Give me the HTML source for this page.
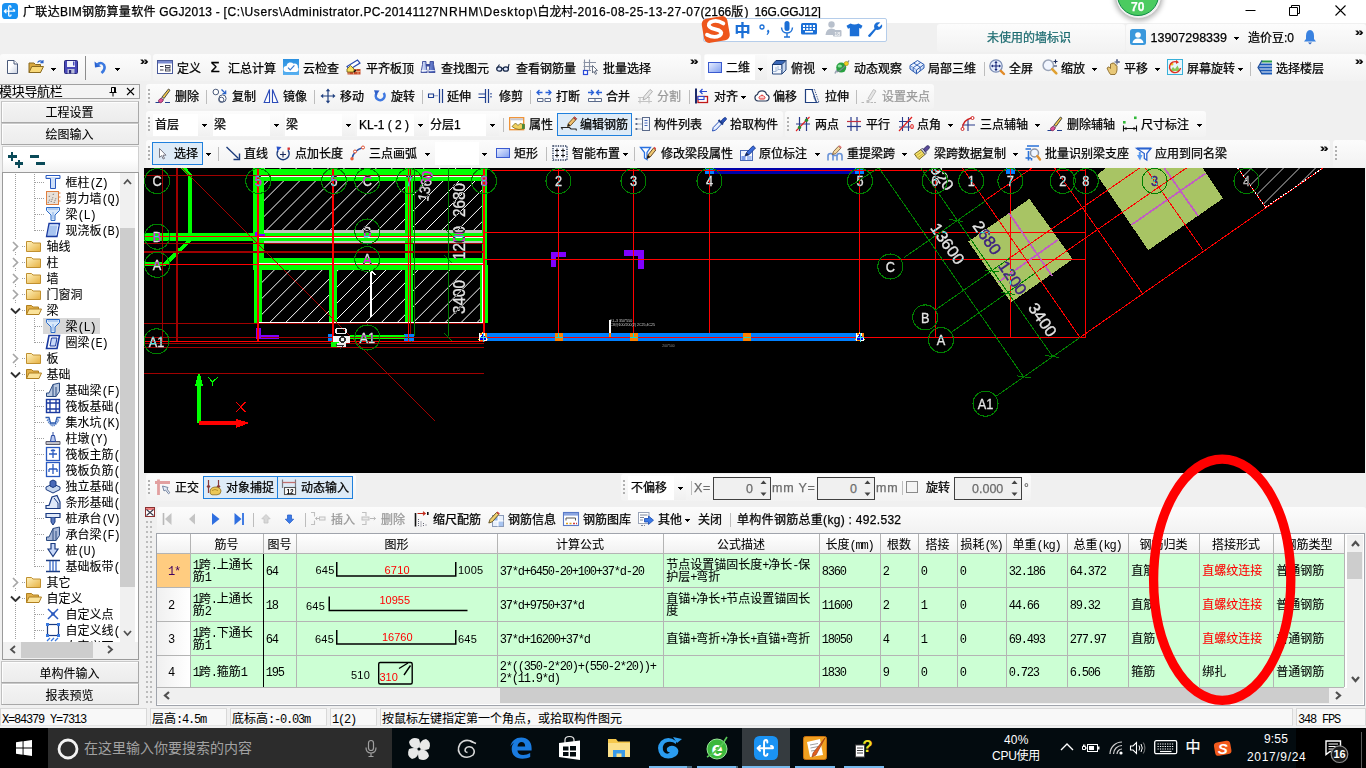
<!DOCTYPE html><html lang="zh-CN"><head><meta charset="utf-8"><title>广联达BIM钢筋算量软件 GGJ2013</title><style>
*{box-sizing:border-box;margin:0;padding:0}
html,body{width:1366px;height:768px;overflow:hidden;background:#f0f0f0}
body{position:relative;font-family:"Liberation Sans","Noto Sans CJK SC",sans-serif;font-size:12px;color:#000}
div,span.t,svg{position:absolute}
svg{overflow:visible}
.t{white-space:nowrap;display:block;-webkit-text-stroke:0.25px}
.s{font-family:"Liberation Mono","Noto Sans CJK SC",sans-serif;font-size:12px;-webkit-text-stroke:0.08px}
i{font-style:normal;font-family:"Liberation Mono",monospace;font-size:12px;letter-spacing:-1.2px;-webkit-text-stroke:0}
</style></head><body>
<div style="left:0px;top:0px;width:1366px;height:22.5px;background:#fff"></div>
<svg style="left:2px;top:3px;" width="16" height="16" viewBox="0 0 16 16"><rect x="0" y="0" width="16" height="16" rx="3.6" fill="#1a92f2"/><path d="M6.7 12.3V4.2Q6.8 2.7 8 2.7Q9 2.8 8.9 4.3M6.7 12.3Q6.9 13.3 8 13.2Q9 13 9 11.9" fill="none" stroke="#fff" stroke-width="1.3" stroke-linecap="round"/><path d="M2.6 8.2H12.6Q12.9 6.7 11.3 6.6M4 6.6L2.4 8.2L4 9.8" fill="none" stroke="#fff" stroke-width="1.3" stroke-linecap="round" stroke-linejoin="round"/></svg>
<span class="t y" style="left:23.1px;top:2.0px;height:20px;line-height:20px;white-space:pre;"><span style="letter-spacing:0.271px">广联达BIM钢筋算量软件 </span><span style="letter-spacing:0.217px">GGJ2013 - </span><span style="letter-spacing:0.606px">[C:\Users\</span><span style="letter-spacing:0.478px">Administrator</span><span style="letter-spacing:0.242px">.PC-20141127</span><span style="letter-spacing:1.0px">NRHM</span><span style="letter-spacing:0.855px">\Desktop\</span><span style="letter-spacing:-0.205px">白龙村</span><span style="letter-spacing:0.509px">-2016-08-25-13-27-07</span><span style="letter-spacing:-0.001px">(2166</span><span style="letter-spacing:1.252px">版) </span><span style="letter-spacing:-0.098px">16G.GGJ12]</span></span>
<svg style="left:1244px;top:3px;" width="110" height="14" viewBox="0 0 110 14"><path d="M1.5 7.5H11.5" stroke="#000" fill="none"/><path d="M45.5 4.5H53.5V12.5H45.5ZM47.5 4.5V2.5H55.5V10.5H53.5" stroke="#000" fill="none"/><path d="M91.5 2.5L101.5 12.5M101.5 2.5L91.5 12.5" stroke="#000" fill="none" stroke-width="1.1"/></svg>
<div style="left:1114.5px;top:-28.5px;width:47px;height:47px;border-radius:50%;background:#f0f0f0;border:1px solid #c4c4c4;box-shadow:0 1px 5px 1px rgba(0,0,0,.28)"></div>
<div style="left:1117px;top:-25.6px;width:42px;height:42px;border-radius:50%;background:#4bcb60;border:1px solid #0c8a44"></div>
<span class="t y" style="left:1131px;top:1.2999999999999998px;height:12px;line-height:12px;color:#fff;font-weight:bold;font-size:12px;">70</span>
<div style="left:937px;top:24px;width:188px;height:28px;background:linear-gradient(#fcfcfc,#f2f2f2);border-radius:3px;"></div>
<div style="left:1126px;top:24px;width:240px;height:28px;background:linear-gradient(#fcfcfc,#f2f2f2);border-radius:3px;"></div>
<span class="t y" style="left:987px;top:28.0px;height:20px;line-height:20px;color:#1c6b70">未使用的墙标识</span>
<svg style="left:1130px;top:28.5px;" width="16" height="16" viewBox="0 0 16 16"><rect x="0" y="0" width="16" height="16" rx="2.5" fill="#3a98dc"/><circle cx="8" cy="6" r="2.8" fill="#fff"/><path d="M2.5 14Q3 9.5 8 9.5Q13 9.5 13.5 14Z" fill="#fff"/></svg>
<span class="t y" style="left:1150.5px;top:27.5px;height:20px;line-height:20px;font-size:12.5px;letter-spacing:0.001px;">13907298339</span>
<svg style="left:1233.5px;top:36.5px;shape-rendering:crispEdges" width="5" height="3" viewBox="0 0 5 3"><path d="M0 0H5L2.5 3Z" fill="#000"/></svg>
<span class="t y" style="left:1248px;top:27.5px;height:20px;line-height:20px;">造价豆:0</span>
<svg style="left:1302px;top:28.5px;" width="16" height="16" viewBox="0 0 16 16"><path d="M8 1Q12 1.5 12 7V10L14 12.5H2L4 10V7Q4 1.5 8 1Z" fill="#3a82e0"/><path d="M6 13.5H10L8 15.5Z" fill="#2a62c0"/></svg>
<span class="t y" style="left:1354.5px;top:26.5px;height:12px;line-height:12px;font-size:12px;font-weight:bold;transform:scale(1.3,0.85);transform-origin:0 50%">»</span>
<div style="left:703px;top:18px;width:184px;height:23.5px;background:#fff;border:1px solid #b5cdea;border-radius:2px"></div>
<svg style="left:700.3px;top:12.3px;" width="32.5" height="32.5" viewBox="0 0 30 30"><g transform="rotate(-10 14 16)"><rect x="2.5" y="5" width="24" height="22.5" rx="5" fill="#ee561c"/></g><path d="M21.5 10.5Q15 6.5 9.5 9.5Q6 12.5 11 15L17.5 17Q21.5 19 18 21.8Q13 24.5 6.5 21" fill="none" stroke="#fff" stroke-width="3.6" stroke-linecap="round"/></svg>
<svg style="left:703px;top:14px;" width="184" height="30" viewBox="0 0 184 30"><g fill="#1b6fd6"><circle cx="59" cy="13" r="2" fill="none" stroke="#1b6fd6" stroke-width="1.3"/><path d="M65 15.5Q68 17 64.5 21L63.5 20.5Q65.5 18 63.8 17.2Z"/><rect x="81.5" y="7" width="5" height="10" rx="2.5"/><path d="M78.5 13.5Q79 19 84 19Q89 19 89.5 13.5M84 19V23M81 23H87" fill="none" stroke="#1b6fd6" stroke-width="1.4"/><rect x="98" y="9" width="16" height="11.5" rx="1.5"/><g fill="#fff"><rect x="100" y="11" width="2" height="2"/><rect x="103.3" y="11" width="2" height="2"/><rect x="106.6" y="11" width="2" height="2"/><rect x="110" y="11" width="2" height="2"/><rect x="100" y="14" width="2" height="2"/><rect x="103.3" y="14" width="2" height="2"/><rect x="106.6" y="14" width="2" height="2"/><rect x="110" y="14" width="2" height="2"/><rect x="102" y="17" width="8" height="1.6"/></g><g fill="#b8c0cc"><circle cx="128.5" cy="10.5" r="3.2"/><path d="M122.5 21Q123 14.5 128.5 14.5Q132 14.5 133.5 17V21Z"/><rect x="130" y="16" width="8.5" height="6.5" rx="1"/></g><text x="134.3" y="21.6" font-size="5.5" font-family="Liberation Sans,sans-serif" fill="#fff" text-anchor="middle">18</text><path d="M147.5 9.5L143.5 11.7L145 14.7L146.8 14V22.3H156.2V14L158 14.7L159.5 11.7L155.5 9.5Q151.5 11.5 147.5 9.5Z"/><path d="M165 21.5L171.5 14.5Q170 10.8 173.5 8.6Q175.5 7.8 177.3 8.5L174.3 11.3L176 13.2L179 10.3Q179.8 12.3 178.3 14.2Q176 16.5 173 15.8L167 23Q165.5 23.3 165 21.5Z"/></g></svg>
<span class="t y" style="left:734.5px;top:20.5px;height:20px;line-height:20px;color:#1b6fd6;font-weight:bold;font-size:16px;">中</span>
<div style="left:0px;top:54px;width:151px;height:27px;background:linear-gradient(#fcfcfc,#f2f2f2);border-radius:3px;"></div>
<div style="left:153px;top:54px;width:548px;height:27px;background:linear-gradient(#fcfcfc,#f2f2f2);border-radius:3px;"></div>
<div style="left:704px;top:54px;width:662px;height:27px;background:linear-gradient(#fcfcfc,#f2f2f2);border-radius:3px;"></div>
<div style="left:705px;top:55px;width:50px;height:24.5px;background:#fff"></div>
<svg style="left:4px;top:59px;" width="16" height="16" viewBox="0 0 16 16"><defs><linearGradient id="gnw" x1="0" y1="0" x2="1" y2="1"><stop offset="0.4" stop-color="#fff"/><stop offset="1" stop-color="#c8d0e0"/></linearGradient></defs><path d="M3.5 1.5H10L13.5 5V14.5H3.5Z" fill="url(#gnw)" stroke="#4a5a7a"/><path d="M10 1.5V5H13.5" fill="#fff" stroke="#4a5a7a"/></svg>
<svg style="left:28px;top:59px;" width="16" height="16" viewBox="0 0 16 16"><path d="M1 4H6L7.5 5.5H12.5V13.5H1Z" fill="#d8a840" stroke="#8a6a20"/><path d="M1 13.5L3.8 7.5H15.5L12.5 13.5Z" fill="#f8d878" stroke="#8a6a20"/><path d="M9.5 3.5Q12 0.5 14.5 3M15 1V3.6H12.4" stroke="#2a62c8" stroke-width="1.1" fill="none"/></svg>
<svg style="left:50.5px;top:67.5px;shape-rendering:crispEdges" width="5" height="3" viewBox="0 0 5 3"><path d="M0 0H5L2.5 3Z" fill="#000"/></svg>
<svg style="left:63px;top:59px;" width="16" height="16" viewBox="0 0 16 16"><rect x="1.5" y="1.5" width="13" height="13" rx="1" fill="#4848b8" stroke="#28287a"/><rect x="4" y="2" width="8" height="6" fill="#f0f2fa"/><rect x="10" y="2.5" width="1.5" height="4" fill="#4848b8"/><rect x="4.5" y="10" width="7" height="4.5" fill="#b8bcd8"/><rect x="6" y="11" width="2.2" height="3.5" fill="#28287a"/></svg>
<svg style="left:92px;top:59px;" width="16" height="16" viewBox="0 0 16 16"><path d="M2.5 2.5L3 8.5L9 7.5Z" fill="#2a62d0"/><path d="M5 6Q9 2 12 6Q14 10 9.5 14" fill="none" stroke="#3a78e0" stroke-width="2.6"/></svg>
<svg style="left:114.5px;top:67.5px;shape-rendering:crispEdges" width="5" height="3" viewBox="0 0 5 3"><path d="M0 0H5L2.5 3Z" fill="#000"/></svg>
<svg style="left:157px;top:59px;" width="16" height="16" viewBox="0 0 16 16"><rect x="0.5" y="1.5" width="15" height="13" fill="#fff" stroke="#4a5a9a"/><rect x="1" y="2" width="14" height="2.5" fill="#7a8ad0"/><path d="M3 7.5H6.5M3 11H6.5" stroke="#3a3a4a" stroke-width="1.1"/><rect x="8.5" y="6.5" width="4.5" height="2" fill="none" stroke="#3a3a4a" stroke-width="0.9"/><rect x="8.5" y="10" width="4.5" height="2" fill="none" stroke="#3a3a4a" stroke-width="0.9"/></svg>
<span class="t y" style="left:177px;top:59.0px;height:20px;line-height:20px;">定义</span>
<span class="t y" style="left:210.5px;top:59.0px;height:20px;line-height:20px;font-size:15px;margin-top:-2px;-webkit-text-stroke:0.3px">Σ</span>
<span class="t y" style="left:228px;top:59.0px;height:20px;line-height:20px;">汇总计算</span>
<svg style="left:283px;top:59px;" width="16" height="16" viewBox="0 0 16 16"><defs><linearGradient id="gcl" x1="0" y1="0" x2="0" y2="1"><stop offset="0" stop-color="#2a90e0"/><stop offset="1" stop-color="#58b0f0"/></linearGradient></defs><rect x="0" y="0" width="16" height="16" fill="url(#gcl)"/><path d="M3.5 13A3 3 0 0 1 3.5 7A4 4 0 0 1 10.5 4.8A3.2 3.2 0 0 1 14.8 8.5A2.6 2.6 0 0 1 13 13Z" fill="#fff"/><path d="M5 8.6L7.2 10.8L11.4 6.4" stroke="#3a7ad0" stroke-width="1.2" fill="none"/></svg>
<span class="t y" style="left:303px;top:59.0px;height:20px;line-height:20px;">云检查</span>
<svg style="left:346px;top:59px;" width="16" height="16" viewBox="0 0 16 16"><path d="M1 7.5L11.5 1L14 4L3.5 10.5Z" fill="#fff" stroke="#2a4ab0" stroke-width="1.2"/><path d="M1.5 15.5V10H14.5V15.5Z" fill="#c84a28"/><path d="M1.5 12.5H14.5M5 10V12.5M10 10V12.5M7.5 12.5V15.5M12 12.5V15.5M3 12.5V15.5" stroke="#f0c8a0" stroke-width="0.7"/><path d="M1 10L4.5 6.5L8 10V13H1Z" fill="#f8e060" stroke="#6a5a10" stroke-width="0.8"/><path d="M8 13L10 11" stroke="#111" stroke-width="1.5"/></svg>
<span class="t y" style="left:366px;top:59.0px;height:20px;line-height:20px;">平齐板顶</span>
<svg style="left:420px;top:59px;" width="16" height="16" viewBox="0 0 16 16"><defs><linearGradient id="gbn" x1="0" y1="0" x2="1" y2="0"><stop offset="0" stop-color="#e8eefc"/><stop offset="0.5" stop-color="#8aa0e0"/><stop offset="1" stop-color="#3a52b0"/></linearGradient></defs><path d="M2.5 2.5H6V5.5L7.2 13.5H1L2.5 5.5ZM10 2.5H13.5V5.5L15 13.5H8.8L10 5.5Z" fill="url(#gbn)" stroke="#3a4a9a" stroke-width="0.9"/><rect x="6" y="5" width="4" height="2.5" fill="#3a4a9a"/><path d="M1.5 11.5H7M9 11.5H14.7" stroke="#fff" stroke-width="0.8"/></svg>
<span class="t y" style="left:441px;top:59.0px;height:20px;line-height:20px;">查找图元</span>
<svg style="left:495px;top:59px;" width="16" height="16" viewBox="0 0 16 16"><ellipse cx="4.3" cy="10" rx="2.6" ry="2.2" fill="#dfe8ff" stroke="#1a2a4a" stroke-width="1.3"/><ellipse cx="10.8" cy="10" rx="2.6" ry="2.2" fill="#dfe8ff" stroke="#1a2a4a" stroke-width="1.3"/><path d="M6.8 9.5H8.3M2 9L4.5 5.5M13.2 9.2L14 5" fill="none" stroke="#1a2a4a" stroke-width="1.1"/></svg>
<span class="t y" style="left:516px;top:59.0px;height:20px;line-height:20px;">查看钢筋量</span>
<svg style="left:583px;top:59px;" width="16" height="16" viewBox="0 0 16 16"><path d="M1.5 0.5V12M0.5 3.5H13M0.5 7.5H11M0.5 11.5H8M6.5 0.5V12" stroke="#8a92a4" stroke-width="1.1" fill="none"/><rect x="0.5" y="11.5" width="4" height="4" fill="#fff" stroke="#2a4ad8" stroke-width="1.2"/><path d="M9.5 6.5L14.5 11.5L12.2 11.8L13.6 14.8L12.4 15.4L11 12.4L9.5 14Z" fill="#fff" stroke="#5a6478" stroke-width="0.9"/></svg>
<span class="t y" style="left:603px;top:59.0px;height:20px;line-height:20px;">批量选择</span>
<svg style="left:707px;top:59px;" width="16" height="16" viewBox="0 0 16 16"><defs><linearGradient id="g2d" x1="0" y1="0" x2="1" y2="1"><stop offset="0" stop-color="#eaf0ff"/><stop offset="1" stop-color="#7f9ef0"/></linearGradient></defs><rect x="1.5" y="3.5" width="13" height="10" fill="url(#g2d)" stroke="#3a5ad0"/></svg>
<span class="t y" style="left:726px;top:59.0px;height:20px;line-height:20px;margin-top:-1px">二维</span>
<svg style="left:757.5px;top:67.5px;shape-rendering:crispEdges" width="5" height="3" viewBox="0 0 5 3"><path d="M0 0H5L2.5 3Z" fill="#000"/></svg>
<svg style="left:771px;top:59px;" width="16" height="16" viewBox="0 0 16 16"><path d="M1.5 5.5H11V15H1.5Z" fill="#f4f8fe" stroke="#2a4a80"/><path d="M1.5 5.5L5 1.5H15L11 5.5Z" fill="#3a68b8" stroke="#1a3a70"/><path d="M15 1.5V11L11 15V5.5Z" fill="#c8d8f0" stroke="#2a4a80"/><path d="M5 8V12.5H1.5M5 12.5L7 10.5H11M7 10.5V7" stroke="#9ab0d0" fill="none" stroke-width="0.9"/></svg>
<span class="t y" style="left:791px;top:59.0px;height:20px;line-height:20px;">俯视</span>
<svg style="left:821.5px;top:67.5px;shape-rendering:crispEdges" width="5" height="3" viewBox="0 0 5 3"><path d="M0 0H5L2.5 3Z" fill="#000"/></svg>
<svg style="left:834px;top:59px;" width="16" height="16" viewBox="0 0 16 16"><path d="M1 14.5Q3 10 9 6" stroke="#9aa4b4" fill="none" stroke-width="1.6"/><circle cx="7.2" cy="8.6" r="5" fill="#28a040"/><ellipse cx="5.8" cy="7" rx="2.2" ry="1.6" fill="#a0f0b0" opacity="0.8"/><path d="M3 13Q10 10 15 1.5" stroke="#7a8494" fill="none" stroke-width="1.3"/><circle cx="12.3" cy="4.6" r="2.1" fill="#f0d020" stroke="#a08a10" stroke-width="0.6"/></svg>
<span class="t y" style="left:854px;top:59.0px;height:20px;line-height:20px;">动态观察</span>
<svg style="left:909px;top:59px;" width="16" height="16" viewBox="0 0 16 16"><path d="M1 6.5L8.5 1.5L15 5.5L7.5 11Z" fill="#eaf2ff" stroke="#2a5ab0" stroke-width="1"/><path d="M1 6.5V10L7.5 14.8V11M15 5.5V9L7.5 14.8" fill="#c8daf8" stroke="#2a5ab0" stroke-width="1"/><path d="M4.7 4L11.2 8.2M11.7 3.5L4.2 8.7M4.2 8.7V12.3M11.2 8.2V12" stroke="#2a5ab0" stroke-width="0.9" fill="none"/></svg>
<span class="t y" style="left:928px;top:59.0px;height:20px;line-height:20px;">局部三维</span>
<div style="left:984px;top:61.5px;width:1px;height:14px;background:#bdbdbd"></div>
<svg style="left:989px;top:59px;" width="16" height="16" viewBox="0 0 16 16"><circle cx="7" cy="7" r="6.2" fill="#e6eefc" stroke="#7a8cb4" stroke-width="1.3"/><path d="M7 3.2V10.8M3.2 7H10.8" stroke="#1a2a7a" stroke-width="1.1"/><path d="M7 1.8L5.4 4H8.6ZM7 12.2L5.4 10H8.6ZM1.8 7L4 5.4V8.6ZM12.2 7L10 5.4V8.6Z" fill="#1a2a7a"/><path d="M11.8 11.8L15 15" stroke="#e08a28" stroke-width="2.4" stroke-linecap="round"/></svg>
<span class="t y" style="left:1009px;top:59.0px;height:20px;line-height:20px;">全屏</span>
<svg style="left:1042px;top:59px;" width="16" height="16" viewBox="0 0 16 16"><circle cx="6.3" cy="6.3" r="5.2" fill="#f2f6ff" stroke="#9aa4b8" stroke-width="1.5"/><path d="M10.2 10.2L14.3 14.3" stroke="#e0a030" stroke-width="2.6" stroke-linecap="round"/><path d="M13.5 0.5V4.5M11.5 2.5H15.5M11.8 7H15" stroke="#1a2a5a" stroke-width="1.1"/></svg>
<span class="t y" style="left:1061px;top:59.0px;height:20px;line-height:20px;">缩放</span>
<svg style="left:1091.5px;top:67.5px;shape-rendering:crispEdges" width="5" height="3" viewBox="0 0 5 3"><path d="M0 0H5L2.5 3Z" fill="#000"/></svg>
<svg style="left:1105px;top:59px;" width="16" height="16" viewBox="0 0 16 16"><path d="M2 9L4 7.8L5.5 9.5V5Q6.3 4 7.2 5V4.2Q8.2 3.4 9 4.4V5Q10 4.4 10.6 5.4V6.4Q11.6 6 12 7V11Q11.8 14 10 15.5H5.5Q3.5 13 2 9Z" fill="#e8c878" stroke="#8a6a2a" stroke-width="0.9"/><path d="M12 0.5V5.5M9.5 3H14.5" stroke="#2a3a6a" stroke-width="0.9"/><path d="M12 0L10.9 1.4H13.1ZM15 3L13.6 1.9V4.1Z" fill="#2a3a6a"/></svg>
<span class="t y" style="left:1124px;top:59.0px;height:20px;line-height:20px;">平移</span>
<svg style="left:1154.5px;top:67.5px;shape-rendering:crispEdges" width="5" height="3" viewBox="0 0 5 3"><path d="M0 0H5L2.5 3Z" fill="#000"/></svg>
<svg style="left:1167px;top:59px;" width="16" height="16" viewBox="0 0 16 16"><rect x="0.5" y="0.5" width="15" height="15" fill="#e8f6fc" stroke="#38b0d8"/><path d="M3 12L6 8L8 10L10.5 6.5L13 12Z" fill="#8ac858"/><circle cx="5" cy="5" r="1.5" fill="#f0c020"/><path d="M13.5 9A5.5 5.5 0 1 1 10 3" fill="none" stroke="#e03020" stroke-width="1.4"/><path d="M9 1L12 3.3L9 5Z" fill="#e03020"/></svg>
<span class="t y" style="left:1187px;top:59.0px;height:20px;line-height:20px;">屏幕旋转</span>
<svg style="left:1237.5px;top:67.5px;shape-rendering:crispEdges" width="5" height="3" viewBox="0 0 5 3"><path d="M0 0H5L2.5 3Z" fill="#000"/></svg>
<div style="left:1250px;top:61.5px;width:1px;height:14px;background:#bdbdbd"></div>
<svg style="left:1257px;top:59px;" width="16" height="16" viewBox="0 0 16 16"><path d="M4.5 2.5H15" stroke="#2a9a4a" stroke-width="2"/><path d="M3 5.5H15M1.5 8.5H15M3 11.5H15M4.5 14.5H15" stroke="#1a5ab8" stroke-width="1.8"/><path d="M5 1.5L1 8.5L5 15" stroke="#1a4a98" fill="none" stroke-width="1.2"/></svg>
<span class="t y" style="left:1276px;top:59.0px;height:20px;line-height:20px;">选择楼层</span>
<div style="left:85px;top:55.5px;width:1px;height:24.5px;background:#8c8c8c"></div>
<div style="left:755px;top:55px;width:12px;height:24.5px;background:linear-gradient(#fafafa,#eeeeee)"></div>
<svg style="left:757.5px;top:67.5px;shape-rendering:crispEdges" width="5" height="3" viewBox="0 0 5 3"><path d="M0 0H5L2.5 3Z" fill="#000"/></svg>
<span class="t y" style="left:139.5px;top:55.5px;height:12px;line-height:12px;font-size:12px;font-weight:bold;transform:scale(1.3,0.85);transform-origin:0 50%">»</span>
<span class="t y" style="left:689.5px;top:55.5px;height:12px;line-height:12px;font-size:12px;font-weight:bold;transform:scale(1.3,0.85);transform-origin:0 50%">»</span>
<span class="t y" style="left:1354.5px;top:55.5px;height:12px;line-height:12px;font-size:12px;font-weight:bold;transform:scale(1.3,0.85);transform-origin:0 50%">»</span>
<div style="left:146px;top:83.5px;width:788px;height:25.5px;background:linear-gradient(#fcfcfc,#f2f2f2);border-radius:3px;"></div>
<svg style="left:148px;top:89px;shape-rendering:crispEdges" width="2" height="14" viewBox="0 0 2 14"><rect x="0" y="0" width="2" height="2" fill="#b0b0b0"/><rect x="0" y="4" width="2" height="2" fill="#b0b0b0"/><rect x="0" y="8" width="2" height="2" fill="#b0b0b0"/><rect x="0" y="12" width="2" height="2" fill="#b0b0b0"/></svg>
<svg style="left:155px;top:88px;" width="16" height="16" viewBox="0 0 16 16"><path d="M0.5 14.5H4.5M10 14.5H15" stroke="#1f3f8f" stroke-width="1.2"/><path d="M13.5 1L15 2.2L9 10.5L7 9Z" fill="#f2c94c" stroke="#3a3a3a" stroke-width="0.9"/><path d="M7 9L9 10.5L7.8 12.5L5.8 11Z" fill="#f4f4f4" stroke="#555" stroke-width="0.7"/><ellipse cx="5.8" cy="12.6" rx="2.4" ry="1.9" fill="#e0569a" stroke="#7a2a5a" stroke-width="0.8" transform="rotate(-35 5.8 12.6)"/></svg>
<span class="t y" style="left:175px;top:87.0px;height:20px;line-height:20px;">删除</span>
<div style="left:206px;top:89.5px;width:1px;height:14px;background:#bdbdbd"></div>
<svg style="left:212px;top:88px;" width="16" height="16" viewBox="0 0 16 16"><circle cx="3.8" cy="4" r="2.8" fill="#fff" stroke="#4a5a7a" stroke-width="1"/><circle cx="10.5" cy="10.5" r="3.6" fill="#fff" stroke="#4a5a7a" stroke-width="1"/><circle cx="9.3" cy="11.8" r="2.6" fill="none" stroke="#4a5a7a" stroke-width="1"/><path d="M9.5 1.5L13.5 5.5M13.7 2.5V5.7H10.5" stroke="#2a62c8" stroke-width="1.2" fill="none"/></svg>
<span class="t y" style="left:232px;top:87.0px;height:20px;line-height:20px;">复制</span>
<svg style="left:263px;top:88px;" width="16" height="16" viewBox="0 0 16 16"><path d="M6.5 1.5V14.5H1.2ZM9.5 1.5V14.5H14.8Z" fill="#fff" stroke="#2a4ab8" stroke-width="1.1"/></svg>
<span class="t y" style="left:283px;top:87.0px;height:20px;line-height:20px;">镜像</span>
<div style="left:314px;top:89.5px;width:1px;height:14px;background:#bdbdbd"></div>
<svg style="left:320px;top:88px;" width="16" height="16" viewBox="0 0 16 16"><path d="M8 2V14M2 8H14" stroke="#1f3f7f" stroke-width="1.2"/><path d="M8 0.5L5.8 3.2H10.2ZM8 15.5L5.8 12.8H10.2ZM0.5 8L3.2 5.8V10.2ZM15.5 8L12.8 5.8V10.2Z" fill="#1f3f7f"/></svg>
<span class="t y" style="left:340px;top:87.0px;height:20px;line-height:20px;">移动</span>
<svg style="left:372px;top:88px;" width="16" height="16" viewBox="0 0 16 16"><path d="M4.6 5.2A4.4 4.4 0 1 0 11.6 5" fill="none" stroke="#3f78e0" stroke-width="2.6"/><path d="M2 2.2L7.5 2.6L4 7.8Z" fill="#2f5fc8"/></svg>
<span class="t y" style="left:391px;top:87.0px;height:20px;line-height:20px;">旋转</span>
<div style="left:422px;top:89.5px;width:1px;height:14px;background:#bdbdbd"></div>
<svg style="left:428px;top:88px;" width="16" height="16" viewBox="0 0 16 16"><path d="M0.5 6H5.5V9.5H0.5Z" fill="none" stroke="#1f3f8f" stroke-width="1.1"/><path d="M6.5 7.7H10" stroke="#1f3f8f" stroke-width="1.1" stroke-dasharray="1 1"/><path d="M11.5 1V15M14.5 1V15" stroke="#1f3f8f" stroke-width="1.2"/></svg>
<span class="t y" style="left:447px;top:87.0px;height:20px;line-height:20px;">延伸</span>
<svg style="left:478px;top:88px;" width="16" height="16" viewBox="0 0 16 16"><path d="M0.5 6H7M0.5 9.5H7" stroke="#1f3f8f" stroke-width="1.1"/><path d="M7.5 1V15M10.5 1V15" stroke="#1f3f8f" stroke-width="1.2"/><path d="M13 5V11" stroke="#1f3f8f" stroke-width="1.2" stroke-dasharray="1.5 1.5"/></svg>
<span class="t y" style="left:499px;top:87.0px;height:20px;line-height:20px;">修剪</span>
<div style="left:530px;top:89.5px;width:1px;height:14px;background:#bdbdbd"></div>
<svg style="left:536px;top:88px;" width="16" height="16" viewBox="0 0 16 16"><path d="M1 4.5H6.5M9.5 4.5H15M3.5 2L1 4.5L3.5 7M12.5 2L15 4.5L12.5 7" fill="none" stroke="#2a62d8" stroke-width="1.3"/><path d="M1.5 10.5H7V13.5H1.5ZM9 10.5H14.5V13.5H9Z" fill="#fff" stroke="#5a6a8a" stroke-width="1"/></svg>
<span class="t y" style="left:556px;top:87.0px;height:20px;line-height:20px;">打断</span>
<svg style="left:587px;top:88px;" width="16" height="16" viewBox="0 0 16 16"><path d="M1 4.5H6.5M9.5 4.5H15M4 2L6.5 4.5L4 7M12 2L9.5 4.5L12 7" fill="none" stroke="#2a62d8" stroke-width="1.3"/><path d="M1.5 10.5H14.5V13.5H1.5ZM8 10.5V13.5" fill="#fff" stroke="#5a6a8a" stroke-width="1"/></svg>
<span class="t y" style="left:606px;top:87.0px;height:20px;line-height:20px;">合并</span>
<svg style="left:637px;top:88px;" width="16" height="16" viewBox="0 0 16 16"><path d="M1 9.5H13M1 13.5H15M3 9.5V15.5M12 9.5V15.5" stroke="#c4c4c4" stroke-width="1.1"/><path d="M6 12L7 8.5L13 1.5L15.5 3.5L9.5 10.5Z" fill="#e8e8e8" stroke="#b0b0b0"/></svg>
<span class="t y" style="left:657px;top:87.0px;height:20px;line-height:20px;color:#9a9a9a;">分割</span>
<div style="left:689px;top:89.5px;width:1px;height:14px;background:#bdbdbd"></div>
<svg style="left:694px;top:88px;" width="16" height="16" viewBox="0 0 16 16"><path d="M2 0.5V15.5" stroke="#1a2a6a" stroke-width="2"/><path d="M6 3.5H13M8.5 1L6 3.5L8.5 6" stroke="#2a4ad0" stroke-width="1.2" fill="none"/><rect x="4" y="8.5" width="9.5" height="6" fill="#fff" stroke="#c01818" stroke-width="1.3"/><rect x="4" y="8.5" width="6" height="3" fill="#fff" stroke="#2a4ad0" stroke-width="1.1"/></svg>
<span class="t y" style="left:714px;top:87.0px;height:20px;line-height:20px;">对齐</span>
<svg style="left:740.5px;top:95.5px;shape-rendering:crispEdges" width="5" height="3" viewBox="0 0 5 3"><path d="M0 0H5L2.5 3Z" fill="#000"/></svg>
<svg style="left:754px;top:88px;" width="16" height="16" viewBox="0 0 16 16"><path d="M4 13A3.3 3.3 0 0 1 3.5 6.5A4.6 4.6 0 0 1 12.5 6.5A3.3 3.3 0 0 1 12 13Z" fill="#fff" stroke="#2a3a5a" stroke-width="1.2"/><path d="M5.8 11A1.5 1.5 0 0 1 6.3 8.2A1.9 1.9 0 0 1 9.7 8.2A1.5 1.5 0 0 1 10.2 11Z" fill="#fbd0d0" stroke="#e03030" stroke-width="1"/></svg>
<span class="t y" style="left:773px;top:87.0px;height:20px;line-height:20px;">偏移</span>
<svg style="left:804px;top:88px;" width="16" height="16" viewBox="0 0 16 16"><path d="M1.5 1.5H8L12.5 14.5H1.5Z" fill="#fff" stroke="#1f3f7f" stroke-width="1.2"/><path d="M8 1.5H10.5L15 14.5H12.5" fill="none" stroke="#1f3f7f" stroke-width="1" stroke-dasharray="1.2 1.2"/><path d="M9.5 8.5L11 12.5" stroke="#1f3f7f" stroke-dasharray="1 1"/></svg>
<span class="t y" style="left:825px;top:87.0px;height:20px;line-height:20px;">拉伸</span>
<div style="left:856px;top:89.5px;width:1px;height:14px;background:#bdbdbd"></div>
<svg style="left:861px;top:88px;" width="16" height="16" viewBox="0 0 16 16"><path d="M0.5 14.5H4M9.5 14.5H15" stroke="#b8b8b8" stroke-dasharray="2.5 1"/><rect x="5.5" y="12" width="3" height="3" fill="#c0c0c0"/><path d="M7 10.5L12.5 1.5L15 3L9.5 12Z" fill="#e6e6e6" stroke="#c0c0c0"/></svg>
<span class="t y" style="left:882px;top:87.0px;height:20px;line-height:20px;color:#9a9a9a;">设置夹点</span>
<div style="left:146px;top:111px;width:637px;height:25.5px;background:linear-gradient(#fcfcfc,#f2f2f2);border-radius:3px;"></div>
<div style="left:785px;top:111px;width:421px;height:25.5px;background:linear-gradient(#fcfcfc,#f2f2f2);border-radius:3px;"></div>
<svg style="left:148px;top:117px;shape-rendering:crispEdges" width="2" height="14" viewBox="0 0 2 14"><rect x="0" y="0" width="2" height="2" fill="#b0b0b0"/><rect x="0" y="4" width="2" height="2" fill="#b0b0b0"/><rect x="0" y="8" width="2" height="2" fill="#b0b0b0"/><rect x="0" y="12" width="2" height="2" fill="#b0b0b0"/></svg>
<div style="left:153px;top:113.5px;width:57px;height:22px;background:#fff"></div>
<div style="left:198px;top:113.5px;width:12px;height:22px;background:linear-gradient(#fdfdfd,#f0f0f0)"></div>
<span class="t y" style="left:155px;top:115.0px;height:20px;line-height:20px;">首层</span>
<svg style="left:201.5px;top:123.5px;shape-rendering:crispEdges" width="5" height="3" viewBox="0 0 5 3"><path d="M0 0H5L2.5 3Z" fill="#000"/></svg>
<div style="left:213px;top:113.5px;width:70px;height:22px;background:#fff"></div>
<div style="left:270px;top:113.5px;width:13px;height:22px;background:linear-gradient(#fdfdfd,#f0f0f0)"></div>
<span class="t y" style="left:214px;top:115.0px;height:20px;line-height:20px;">梁</span>
<svg style="left:273.5px;top:123.5px;shape-rendering:crispEdges" width="5" height="3" viewBox="0 0 5 3"><path d="M0 0H5L2.5 3Z" fill="#000"/></svg>
<div style="left:285px;top:113.5px;width:70px;height:22px;background:#fff"></div>
<div style="left:342px;top:113.5px;width:13px;height:22px;background:linear-gradient(#fdfdfd,#f0f0f0)"></div>
<span class="t y" style="left:286px;top:115.0px;height:20px;line-height:20px;">梁</span>
<svg style="left:345.5px;top:123.5px;shape-rendering:crispEdges" width="5" height="3" viewBox="0 0 5 3"><path d="M0 0H5L2.5 3Z" fill="#000"/></svg>
<div style="left:357px;top:113.5px;width:70px;height:22px;background:#fff"></div>
<div style="left:414px;top:113.5px;width:13px;height:22px;background:linear-gradient(#fdfdfd,#f0f0f0)"></div>
<span class="t y" style="left:359px;top:115.0px;height:20px;line-height:20px;">KL-1 ( 2 )</span>
<svg style="left:417.5px;top:123.5px;shape-rendering:crispEdges" width="5" height="3" viewBox="0 0 5 3"><path d="M0 0H5L2.5 3Z" fill="#000"/></svg>
<div style="left:409px;top:113.5px;width:4px;height:22px;background:#fff"></div>
<div style="left:429px;top:113.5px;width:70px;height:22px;background:#fff"></div>
<div style="left:486px;top:113.5px;width:13px;height:22px;background:linear-gradient(#fdfdfd,#f0f0f0)"></div>
<span class="t y" style="left:430px;top:115.0px;height:20px;line-height:20px;">分层1</span>
<svg style="left:489.5px;top:123.5px;shape-rendering:crispEdges" width="5" height="3" viewBox="0 0 5 3"><path d="M0 0H5L2.5 3Z" fill="#000"/></svg>
<div style="left:557px;top:113px;width:75px;height:22.5px;background:#deebf7;border:1.3px solid #1f80dd"></div>
<div style="left:503px;top:117.5px;width:1px;height:14px;background:#bdbdbd"></div>
<svg style="left:509px;top:116px;" width="16" height="16" viewBox="0 0 16 16"><rect x="0.7" y="1.7" width="14" height="12" fill="#fff" stroke="#f09030" stroke-width="1.3"/><rect x="1.3" y="2.3" width="12.8" height="2" fill="#c8c8d0"/><path d="M3 10.5L6.5 7L9 9.5L11 7.5L15.5 8.5V12.5L10 13.5L6 12.5Z" fill="#f0d060" stroke="#7a6a1a" stroke-width="0.8"/><rect x="13" y="8" width="2.5" height="5" fill="#4a8a3a"/></svg>
<span class="t y" style="left:529px;top:115.0px;height:20px;line-height:20px;">属性</span>
<svg style="left:561px;top:116px;" width="16" height="16" viewBox="0 0 16 16"><path d="M1.5 13.5L0.5 11.5H8.5L10 13H15L15.5 14.5" fill="none" stroke="#222" stroke-width="1.1"/><path d="M6.5 10.5L7.3 7.5L12.5 1.8L14.8 3.8L9.6 9.6Z" fill="#f0c070" stroke="#6a4a1a" stroke-width="0.9"/><path d="M12.5 1.8L13.6 0.8L15.8 2.8L14.8 3.8Z" fill="#e05050" stroke="#7a2a2a" stroke-width="0.7"/><path d="M6.5 10.5L7.3 7.5L9.6 9.6Z" fill="#222"/></svg>
<span class="t y" style="left:580px;top:115.0px;height:20px;line-height:20px;">编辑钢筋</span>
<svg style="left:635px;top:116px;" width="16" height="16" viewBox="0 0 16 16"><rect x="7.5" y="1.5" width="7" height="13" fill="#f4f6fc" stroke="#5a6a8a"/><path d="M9.5 4.5H12.5M9.5 7H12.5M9.5 9.5H12.5" stroke="#4a6ab8" stroke-width="1"/><rect x="0.5" y="2" width="2" height="2" fill="#5a6a8a"/><rect x="0.5" y="7" width="2" height="2" fill="#5a6a8a"/><rect x="0.5" y="12" width="2" height="2" fill="#5a6a8a"/><path d="M3.5 3H6.5M3.5 8H6.5M3.5 13H6.5" stroke="#5a6a8a" stroke-dasharray="1 1"/></svg>
<span class="t y" style="left:654px;top:115.0px;height:20px;line-height:20px;">构件列表</span>
<svg style="left:711px;top:116px;" width="16" height="16" viewBox="0 0 16 16"><path d="M1.5 15L2.2 11.5L8.5 5L11 7.5L4.8 14Z" fill="#e8f0ff" stroke="#2a52b8" stroke-width="1"/><path d="M7.5 4L12 8.5" stroke="#1a3a8a" stroke-width="2"/><path d="M10 5L12.8 2Q14.5 0.8 15.3 2.2Q15.8 3.5 14.5 4.5L12 7Z" fill="#2a52b8" stroke="#1a3a8a" stroke-width="0.8"/></svg>
<span class="t y" style="left:730px;top:115.0px;height:20px;line-height:20px;">拾取构件</span>
<svg style="left:787px;top:117px;shape-rendering:crispEdges" width="2" height="14" viewBox="0 0 2 14"><rect x="0" y="0" width="2" height="2" fill="#b0b0b0"/><rect x="0" y="4" width="2" height="2" fill="#b0b0b0"/><rect x="0" y="8" width="2" height="2" fill="#b0b0b0"/><rect x="0" y="12" width="2" height="2" fill="#b0b0b0"/></svg>
<svg style="left:795px;top:116px;" width="16" height="16" viewBox="0 0 16 16"><path d="M4.5 1V15M11.5 1V15M1 8H15" stroke="#2a3a8a" stroke-width="1.2"/><path d="M1 15L14.5 1" stroke="#e02020" stroke-width="1.1"/><circle cx="4.5" cy="11.5" r="1.7" fill="#2a8a2a"/><circle cx="11.5" cy="4.3" r="1.7" fill="#2a8a2a"/></svg>
<span class="t y" style="left:815px;top:115.0px;height:20px;line-height:20px;">两点</span>
<svg style="left:846px;top:116px;" width="16" height="16" viewBox="0 0 16 16"><path d="M5 1V15M11 1V15" stroke="#2a3a8a" stroke-width="1.2"/><path d="M1 5.5H15" stroke="#c03040" stroke-width="1.2"/><path d="M1 10.5H15" stroke="#2a3a8a" stroke-width="1.2"/></svg>
<span class="t y" style="left:866px;top:115.0px;height:20px;line-height:20px;">平行</span>
<svg style="left:898px;top:116px;" width="16" height="16" viewBox="0 0 16 16"><path d="M4.5 1V15M10.5 1V15M1 5.5H13M1 11H12" stroke="#2a3a8a" stroke-width="1.1"/><path d="M1 15L14 1" stroke="#e02020" stroke-width="1.2"/><ellipse cx="14" cy="10.5" rx="1.3" ry="2" fill="none" stroke="#e02020" stroke-width="1.1"/></svg>
<span class="t y" style="left:917px;top:115.0px;height:20px;line-height:20px;">点角</span>
<svg style="left:947.5px;top:123.5px;shape-rendering:crispEdges" width="5" height="3" viewBox="0 0 5 3"><path d="M0 0H5L2.5 3Z" fill="#000"/></svg>
<svg style="left:960px;top:116px;" width="16" height="16" viewBox="0 0 16 16"><path d="M8 3V15M2 9H15" stroke="#2a3a8a" stroke-width="1.1"/><path d="M2.5 12Q3 4 11.5 2" fill="none" stroke="#d02020" stroke-width="1.3"/><circle cx="2.5" cy="13" r="1.5" fill="#fff" stroke="#d02020"/><circle cx="12.5" cy="2" r="1.5" fill="#fff" stroke="#d02020"/></svg>
<span class="t y" style="left:980px;top:115.0px;height:20px;line-height:20px;">三点辅轴</span>
<svg style="left:1034.5px;top:123.5px;shape-rendering:crispEdges" width="5" height="3" viewBox="0 0 5 3"><path d="M0 0H5L2.5 3Z" fill="#000"/></svg>
<svg style="left:1047px;top:116px;" width="16" height="16" viewBox="0 0 16 16"><path d="M0.5 14.5H4.5M10 14.5H15" stroke="#1f3f8f" stroke-width="1.2"/><path d="M13.5 1L15 2.2L9 10.5L7 9Z" fill="#f2c94c" stroke="#3a3a3a" stroke-width="0.9"/><path d="M7 9L9 10.5L7.8 12.5L5.8 11Z" fill="#f4f4f4" stroke="#555" stroke-width="0.7"/><ellipse cx="5.8" cy="12.6" rx="2.4" ry="1.9" fill="#e0569a" stroke="#7a2a5a" stroke-width="0.8" transform="rotate(-35 5.8 12.6)"/></svg>
<span class="t y" style="left:1067px;top:115.0px;height:20px;line-height:20px;">删除辅轴</span>
<svg style="left:1122px;top:116px;" width="16" height="16" viewBox="0 0 16 16"><path d="M1.5 9.5V15.5M14.5 9.5V15.5M1.5 12.5H14.5" stroke="#111" stroke-width="1.1"/><path d="M1.5 12.5L4.5 11V14ZM14.5 12.5L11.5 11V14Z" fill="#111"/><rect x="1" y="5" width="2.6" height="2.6" fill="#30b838"/><rect x="12" y="0.5" width="2.6" height="2.6" fill="#30b838"/></svg>
<span class="t y" style="left:1141px;top:115.0px;height:20px;line-height:20px;">尺寸标注</span>
<svg style="left:1196.5px;top:123.5px;shape-rendering:crispEdges" width="5" height="3" viewBox="0 0 5 3"><path d="M0 0H5L2.5 3Z" fill="#000"/></svg>
<div style="left:146px;top:139.5px;width:1184px;height:28px;background:linear-gradient(#fcfcfc,#f2f2f2);border-radius:3px;"></div>
<div style="left:1333px;top:139.5px;width:33px;height:28px;background:linear-gradient(#fcfcfc,#f2f2f2);border-radius:3px;"></div>
<svg style="left:148px;top:146px;shape-rendering:crispEdges" width="2" height="14" viewBox="0 0 2 14"><rect x="0" y="0" width="2" height="2" fill="#b0b0b0"/><rect x="0" y="4" width="2" height="2" fill="#b0b0b0"/><rect x="0" y="8" width="2" height="2" fill="#b0b0b0"/><rect x="0" y="12" width="2" height="2" fill="#b0b0b0"/></svg>
<svg style="left:1335px;top:146px;shape-rendering:crispEdges" width="2" height="14" viewBox="0 0 2 14"><rect x="0" y="0" width="2" height="2" fill="#b0b0b0"/><rect x="0" y="4" width="2" height="2" fill="#b0b0b0"/><rect x="0" y="8" width="2" height="2" fill="#b0b0b0"/><rect x="0" y="12" width="2" height="2" fill="#b0b0b0"/></svg>
<div style="left:152px;top:142px;width:50.5px;height:22.5px;background:#deebf7;border:1.3px solid #1f80dd"></div>
<div style="left:435px;top:141.5px;width:44px;height:23.5px;background:#fff"></div>
<div style="left:479px;top:141.5px;width:11px;height:23.5px;background:linear-gradient(#fbfbfb,#f1f1f1)"></div>
<svg style="left:156px;top:145px;" width="16" height="16" viewBox="0 0 16 16"><path d="M3.5 3.5V12.5L5.6 10.6L7.2 14L8.5 13.4L7 10.2H10Z" fill="#fff" stroke="#5a5a6a" stroke-width="0.8"/></svg>
<span class="t y" style="left:174px;top:144.0px;height:20px;line-height:20px;">选择</span>
<svg style="left:205.5px;top:152.5px;shape-rendering:crispEdges" width="5" height="3" viewBox="0 0 5 3"><path d="M0 0H5L2.5 3Z" fill="#000"/></svg>
<div style="left:218px;top:146.5px;width:1px;height:14px;background:#bdbdbd"></div>
<svg style="left:225px;top:145px;" width="16" height="16" viewBox="0 0 16 16"><path d="M1.5 2L13.5 13.5" stroke="#1a3a7a" stroke-width="1.3"/><path d="M14.5 8.5V14.5H8.5" stroke="#1a3a7a" stroke-width="1.4" fill="none"/></svg>
<span class="t y" style="left:244px;top:144.0px;height:20px;line-height:20px;">直线</span>
<svg style="left:275px;top:145px;" width="16" height="16" viewBox="0 0 16 16"><path d="M3 5.5A6 6 0 1 0 13 5.2" fill="none" stroke="#1a3a7a" stroke-width="1.5"/><path d="M1.5 1.5L6.5 2L2.5 6.5Z" fill="#2a52c8"/><path d="M8 6.5V12.5M5 9.5H11" stroke="#1a2a5a" stroke-width="1.1"/><rect x="12.5" y="2.5" width="2.4" height="2.4" fill="#d83030"/></svg>
<span class="t y" style="left:295px;top:144.0px;height:20px;line-height:20px;">点加长度</span>
<svg style="left:350px;top:145px;" width="16" height="16" viewBox="0 0 16 16"><path d="M2 14Q3 5.5 13 2.5" fill="none" stroke="#2a52a8" stroke-width="1.4"/><circle cx="2" cy="13.8" r="1.7" fill="#e86040"/><circle cx="5" cy="6.5" r="1.5" fill="#fff" stroke="#e05030" stroke-width="1"/><circle cx="13" cy="2.5" r="1.5" fill="#fff" stroke="#e05030" stroke-width="1"/></svg>
<span class="t y" style="left:369px;top:144.0px;height:20px;line-height:20px;">三点画弧</span>
<svg style="left:424.5px;top:152.5px;shape-rendering:crispEdges" width="5" height="3" viewBox="0 0 5 3"><path d="M0 0H5L2.5 3Z" fill="#000"/></svg>
<svg style="left:481.5px;top:152.5px;shape-rendering:crispEdges" width="5" height="3" viewBox="0 0 5 3"><path d="M0 0H5L2.5 3Z" fill="#000"/></svg>
<svg style="left:495px;top:145px;" width="16" height="16" viewBox="0 0 16 16"><defs><linearGradient id="grc" x1="0" y1="0" x2="1" y2="1"><stop offset="0" stop-color="#eaf0ff"/><stop offset="1" stop-color="#7f9ef0"/></linearGradient></defs><rect x="1.5" y="3.5" width="13" height="9" fill="url(#grc)" stroke="#3a5ad0"/></svg>
<span class="t y" style="left:514px;top:144.0px;height:20px;line-height:20px;">矩形</span>
<div style="left:546px;top:146.5px;width:1px;height:14px;background:#bdbdbd"></div>
<svg style="left:552px;top:145px;" width="16" height="16" viewBox="0 0 16 16"><rect x="1" y="1" width="14" height="14" fill="#f8faff" stroke="#2a3a5a" stroke-width="1.4" stroke-dasharray="1.3 1.1"/><path d="M5 3.5V7.5M3 5.5H7M11 3.5V7.5M9 5.5H13M5 8.5V12.5M3 10.5H7M11 8.5V12.5M9 10.5H13" stroke="#111" stroke-width="1"/></svg>
<span class="t y" style="left:572px;top:144.0px;height:20px;line-height:20px;">智能布置</span>
<svg style="left:622.5px;top:152.5px;shape-rendering:crispEdges" width="5" height="3" viewBox="0 0 5 3"><path d="M0 0H5L2.5 3Z" fill="#000"/></svg>
<div style="left:634px;top:146.5px;width:1px;height:14px;background:#bdbdbd"></div>
<svg style="left:640px;top:145px;" width="16" height="16" viewBox="0 0 16 16"><path d="M0.5 2.5H10.5L7 7.5V14.5L4.5 13V7.5Z" fill="#fff" stroke="#2a72e0" stroke-width="1.3"/><path d="M7 13.5L8 10L13.5 3L15.8 5L10.2 12Z" fill="#f0c870" stroke="#5a3a1a" stroke-width="0.9"/><path d="M13.5 3L14.5 1.8L16 3.3L15.8 5Z" fill="#e04040"/><path d="M7 13.5L8 10L10.2 12Z" fill="#111"/></svg>
<span class="t y" style="left:661px;top:144.0px;height:20px;line-height:20px;">修改梁段属性</span>
<svg style="left:740px;top:145px;" width="16" height="16" viewBox="0 0 16 16"><rect x="0.5" y="5.5" width="12" height="10" fill="#eaf0ff" stroke="#4a6ab8"/><path d="M1 10H12M6 6V15" stroke="#fff" stroke-width="1.2"/><rect x="1.5" y="11" width="4" height="4" fill="#7a9ae8"/><rect x="7" y="11" width="4.5" height="4" fill="#a8c0f4"/><path d="M5 11L6.5 7.5L13 0.8L15.5 3L9 9.8Z" fill="#3a6ad8" stroke="#1a3a8a" stroke-width="0.9"/><path d="M5 11L6.5 7.5L9 9.8Z" fill="#1a2a5a"/></svg>
<span class="t y" style="left:759px;top:144.0px;height:20px;line-height:20px;">原位标注</span>
<svg style="left:814.5px;top:152.5px;shape-rendering:crispEdges" width="5" height="3" viewBox="0 0 5 3"><path d="M0 0H5L2.5 3Z" fill="#000"/></svg>
<svg style="left:827px;top:145px;" width="16" height="16" viewBox="0 0 16 16"><path d="M1 15.5V11Q1 8.5 3.5 8.5Q6 8.5 6 11V15.5M10 15.5V11Q10 8.5 12.5 8.5Q15 8.5 15 11V15.5M6 10.5H10" fill="none" stroke="#6a94d8" stroke-width="1.6"/><path d="M5.5 9.5L6.5 6.5L11.5 1.2L13.8 3.2L8.8 8.6Z" fill="#f4d8a0" stroke="#7a5a3a" stroke-width="0.9"/><path d="M11.5 1.2L12.6 0.2L14.8 2.2L13.8 3.2Z" fill="#e07070"/></svg>
<span class="t y" style="left:847px;top:144.0px;height:20px;line-height:20px;">重提梁跨</span>
<svg style="left:901.5px;top:152.5px;shape-rendering:crispEdges" width="5" height="3" viewBox="0 0 5 3"><path d="M0 0H5L2.5 3Z" fill="#000"/></svg>
<svg style="left:914px;top:145px;" width="16" height="16" viewBox="0 0 16 16"><path d="M0.5 9L7 4.5L11 9.5L5 14.5Q2.5 12.5 0.5 9Z" fill="#f4e068" stroke="#6a5a1a" stroke-width="0.9"/><path d="M2.5 10.5L7.5 7M4 12.5L9 9" stroke="#b8a030" stroke-width="0.8"/><path d="M7 4.5L8.5 3L12.5 8L11 9.5Z" fill="#c8c8d8" stroke="#4a4a5a" stroke-width="0.8"/><path d="M9.5 4L13 0.8Q14.5 0.3 15.3 1.5Q15.8 2.8 14.8 3.8L11.5 7Z" fill="#5a4a9a" stroke="#2a2a5a" stroke-width="0.8"/></svg>
<span class="t y" style="left:934px;top:144.0px;height:20px;line-height:20px;">梁跨数据复制</span>
<svg style="left:1012.5px;top:152.5px;shape-rendering:crispEdges" width="5" height="3" viewBox="0 0 5 3"><path d="M0 0H5L2.5 3Z" fill="#000"/></svg>
<svg style="left:1025px;top:145px;" width="16" height="16" viewBox="0 0 16 16"><path d="M2 1H14M0.5 4H6M0.5 13H6M3.5 6V15.5M6.5 13V15.5" stroke="#2a72d8" stroke-width="1.6" fill="none"/><circle cx="9.5" cy="8" r="4" fill="#f0f6ff" stroke="#8a94a8" stroke-width="1.5"/><path d="M12.3 11L15 14.5" stroke="#e09030" stroke-width="2.4" stroke-linecap="round"/></svg>
<span class="t y" style="left:1045px;top:144.0px;height:20px;line-height:20px;">批量识别梁支座</span>
<svg style="left:1136px;top:145px;" width="16" height="16" viewBox="0 0 16 16"><path d="M0.8 3.5H15L10.8 8.5V15L8.3 13.5V8.5Z" fill="#fff" stroke="#2a62d0" stroke-width="1.3"/><path d="M0.8 3.5H15" stroke="#2a62d0" stroke-width="1.8"/><path d="M1 10L6.5 10L4 15.5Z" fill="#5a9af0"/><path d="M3.8 7V11" stroke="#5a9af0" stroke-width="2"/></svg>
<span class="t y" style="left:1155px;top:144.0px;height:20px;line-height:20px;">应用到同名梁</span>
<span class="t y" style="left:1319.5px;top:142.5px;height:12px;line-height:12px;font-size:12px;font-weight:bold;transform:scale(1.3,0.85);transform-origin:0 50%">»</span>
<div style="left:0px;top:84px;width:139.5px;height:14.5px;background:#f4f4f4;border:1px solid #a0a0a0;border-left:0"></div>
<span class="t s" style="left:-1px;top:85.5px;height:14px;line-height:14px;font-size:13px;letter-spacing:-0.3px">模块导航栏</span>
<svg style="left:108px;top:86px;" width="10" height="12" viewBox="0 0 10 12"><path d="M3.5 1.5H7.5V6.5H3.5ZM6.5 1.5V6.5M1.5 6.5H8.5M5 6.5V10.5" stroke="#000" fill="none"/></svg>
<svg style="left:126px;top:87px;" width="9" height="9" viewBox="0 0 9 9"><path d="M1 1L8 8M8 1L1 8" stroke="#000" fill="none" stroke-width="1.1"/></svg>
<div style="left:0.5px;top:100.5px;width:138.5px;height:22px;background:linear-gradient(#f4f4f4,#ececec);border:1px solid #a8a8a8;border-top-color:#c8c8c8;border-left-color:#c0c0c0;box-shadow:inset 1px 1px 0 #fdfdfd"></div>
<span class="t s" style="left:45.5px;top:105.7px;height:16px;line-height:16px;font-size:12px;">工程设置</span>
<div style="left:0.5px;top:122.5px;width:138.5px;height:22px;background:linear-gradient(#f4f4f4,#ececec);border:1px solid #a8a8a8;border-top-color:#c8c8c8;border-left-color:#c0c0c0;box-shadow:inset 1px 1px 0 #fdfdfd"></div>
<span class="t s" style="left:45.5px;top:127.69999999999999px;height:16px;line-height:16px;font-size:12px;">绘图输入</span>
<div style="left:0.5px;top:660.5px;width:138.5px;height:22px;background:linear-gradient(#f4f4f4,#ececec);border:1px solid #a8a8a8;border-top-color:#c8c8c8;border-left-color:#c0c0c0;box-shadow:inset 1px 1px 0 #fdfdfd"></div>
<span class="t s" style="left:39.5px;top:666.7px;height:16px;line-height:16px;font-size:12px;">单构件输入</span>
<div style="left:0.5px;top:683px;width:138.5px;height:22px;background:linear-gradient(#f4f4f4,#ececec);border:1px solid #a8a8a8;border-top-color:#c8c8c8;border-left-color:#c0c0c0;box-shadow:inset 1px 1px 0 #fdfdfd"></div>
<span class="t s" style="left:45.5px;top:689.2px;height:16px;line-height:16px;font-size:12px;">报表预览</span>
<div style="left:2px;top:145.5px;width:136.5px;height:514px;background:linear-gradient(#fff,#fff 12px,#f0f0f0 27px);border:1px solid #d0d0d0"></div>
<svg style="left:6px;top:151.5px;shape-rendering:crispEdges" width="40" height="18" viewBox="0 0 40 18"><path d="M1.5 4.5H10.5M6 0V9M9 11.5H17M13 7.5V15.5" stroke="#0a4a58" stroke-width="2.5"/><path d="M24 4.5H33M30 11.5H39" stroke="#0a4a58" stroke-width="2.5"/></svg>
<div style="left:2px;top:172px;width:136.5px;height:487.5px;background:#fff;border:1px solid #9a9a9a"></div>
<svg style="left:0;top:0" width="140" height="660" viewBox="0 0 140 660" shape-rendering="crispEdges"><path d="M15.5 174V640" stroke="#a0a0a0" stroke-dasharray="1 1"/><path d="M34.5 174V231" stroke="#a0a0a0" stroke-dasharray="1 1"/><path d="M34.5 318V343" stroke="#a0a0a0" stroke-dasharray="1 1"/><path d="M34.5 382V567" stroke="#a0a0a0" stroke-dasharray="1 1"/><path d="M34.5 606V640" stroke="#a0a0a0" stroke-dasharray="1 1"/><path d="M35 182.5H45" stroke="#a0a0a0" stroke-dasharray="1 1"/><path d="M35 198.5H45" stroke="#a0a0a0" stroke-dasharray="1 1"/><path d="M35 214.5H45" stroke="#a0a0a0" stroke-dasharray="1 1"/><path d="M35 230.5H45" stroke="#a0a0a0" stroke-dasharray="1 1"/><path d="M22 246.5H26" stroke="#a0a0a0" stroke-dasharray="1 1"/><path d="M22 262.5H26" stroke="#a0a0a0" stroke-dasharray="1 1"/><path d="M22 278.5H26" stroke="#a0a0a0" stroke-dasharray="1 1"/><path d="M22 294.5H26" stroke="#a0a0a0" stroke-dasharray="1 1"/><path d="M22 310.5H26" stroke="#a0a0a0" stroke-dasharray="1 1"/><path d="M35 326.5H45" stroke="#a0a0a0" stroke-dasharray="1 1"/><path d="M35 342.5H45" stroke="#a0a0a0" stroke-dasharray="1 1"/><path d="M22 358.5H26" stroke="#a0a0a0" stroke-dasharray="1 1"/><path d="M22 374.5H26" stroke="#a0a0a0" stroke-dasharray="1 1"/><path d="M35 390.5H45" stroke="#a0a0a0" stroke-dasharray="1 1"/><path d="M35 406.5H45" stroke="#a0a0a0" stroke-dasharray="1 1"/><path d="M35 422.5H45" stroke="#a0a0a0" stroke-dasharray="1 1"/><path d="M35 438.5H45" stroke="#a0a0a0" stroke-dasharray="1 1"/><path d="M35 454.5H45" stroke="#a0a0a0" stroke-dasharray="1 1"/><path d="M35 470.5H45" stroke="#a0a0a0" stroke-dasharray="1 1"/><path d="M35 486.5H45" stroke="#a0a0a0" stroke-dasharray="1 1"/><path d="M35 502.5H45" stroke="#a0a0a0" stroke-dasharray="1 1"/><path d="M35 518.5H45" stroke="#a0a0a0" stroke-dasharray="1 1"/><path d="M35 534.5H45" stroke="#a0a0a0" stroke-dasharray="1 1"/><path d="M35 550.5H45" stroke="#a0a0a0" stroke-dasharray="1 1"/><path d="M35 566.5H45" stroke="#a0a0a0" stroke-dasharray="1 1"/><path d="M22 582.5H26" stroke="#a0a0a0" stroke-dasharray="1 1"/><path d="M22 598.5H26" stroke="#a0a0a0" stroke-dasharray="1 1"/><path d="M35 614.5H45" stroke="#a0a0a0" stroke-dasharray="1 1"/><path d="M35 630.5H45" stroke="#a0a0a0" stroke-dasharray="1 1"/><path d="M35 646.5H45" stroke="#a0a0a0" stroke-dasharray="1 1"/></svg>
<svg style="left:45px;top:174px;" width="16" height="16" viewBox="0 0 16 16"><path d="M1 1.5H15V4.5H10.5V14.5H5.5V4.5H1Z" fill="#cfe0f8" stroke="#2a5ac0"/><path d="M2 2.5H14" stroke="#fff"/></svg>
<span class="t s" style="left:65.5px;top:176.0px;height:16px;line-height:16px;">框柱<i>(Z)</i></span>
<svg style="left:45px;top:190px;" width="16" height="16" viewBox="0 0 16 16"><rect x="1.5" y="1.5" width="12" height="13" fill="#e8e0d8" stroke="#e08040"/><path d="M3 13L5 9M6 12L8 7M9 13L11 8M4 7L5 5M8 5L9 3" stroke="#6a6a6a" stroke-dasharray="1 1"/><path d="M13.5 3H15.5M13.5 7H15.5M13.5 11H15.5" stroke="#e08040"/></svg>
<span class="t s" style="left:65.5px;top:192.0px;height:16px;line-height:16px;">剪力墙<i>(Q)</i></span>
<svg style="left:45px;top:206px;" width="16" height="16" viewBox="0 0 16 16"><path d="M1.5 1.5H14.5V4.5L10 9V14.5H6V9L1.5 4.5Z" fill="#d8e8fa" stroke="#2a6ac8"/><path d="M3 3H13M8 6V13" stroke="#8ab0e8"/></svg>
<span class="t s" style="left:65.5px;top:208.0px;height:16px;line-height:16px;">梁<i>(L)</i></span>
<svg style="left:45px;top:222px;" width="16" height="16" viewBox="0 0 16 16"><path d="M4 1.5H14.5L12 14.5H1.5Z" fill="#a8c4f0" stroke="#1a3aa0" stroke-width="1.3"/><path d="M5 3H13L11 13" stroke="#e8f0ff" fill="none"/></svg>
<span class="t s" style="left:65.5px;top:224.0px;height:16px;line-height:16px;">现浇板<i>(B)</i></span>
<div style="left:9px;top:240px;width:13px;height:12px;background:#fff"></div>
<svg style="left:12px;top:241px;" width="7" height="11" viewBox="0 0 7 11"><path d="M1 1L5.5 5.5L1 10" fill="none" stroke="#a6a6a6" stroke-width="1.7"/></svg>
<svg style="left:26px;top:238px;" width="16" height="16" viewBox="0 0 16 16"><defs><linearGradient id="fg238" x1="0" y1="0" x2="1" y2="1"><stop offset="0" stop-color="#fff3c0"/><stop offset="1" stop-color="#e6b040"/></linearGradient></defs><path d="M0.5 3.5H5.5L7 5H14.5V13.5H0.5Z" fill="url(#fg238)" stroke="#c09030"/></svg>
<span class="t s" style="left:46.5px;top:240.0px;height:16px;line-height:16px;">轴线</span>
<div style="left:9px;top:256px;width:13px;height:12px;background:#fff"></div>
<svg style="left:12px;top:257px;" width="7" height="11" viewBox="0 0 7 11"><path d="M1 1L5.5 5.5L1 10" fill="none" stroke="#a6a6a6" stroke-width="1.7"/></svg>
<svg style="left:26px;top:254px;" width="16" height="16" viewBox="0 0 16 16"><defs><linearGradient id="fg254" x1="0" y1="0" x2="1" y2="1"><stop offset="0" stop-color="#fff3c0"/><stop offset="1" stop-color="#e6b040"/></linearGradient></defs><path d="M0.5 3.5H5.5L7 5H14.5V13.5H0.5Z" fill="url(#fg254)" stroke="#c09030"/></svg>
<span class="t s" style="left:46.5px;top:256.0px;height:16px;line-height:16px;">柱</span>
<div style="left:9px;top:272px;width:13px;height:12px;background:#fff"></div>
<svg style="left:12px;top:273px;" width="7" height="11" viewBox="0 0 7 11"><path d="M1 1L5.5 5.5L1 10" fill="none" stroke="#a6a6a6" stroke-width="1.7"/></svg>
<svg style="left:26px;top:270px;" width="16" height="16" viewBox="0 0 16 16"><defs><linearGradient id="fg270" x1="0" y1="0" x2="1" y2="1"><stop offset="0" stop-color="#fff3c0"/><stop offset="1" stop-color="#e6b040"/></linearGradient></defs><path d="M0.5 3.5H5.5L7 5H14.5V13.5H0.5Z" fill="url(#fg270)" stroke="#c09030"/></svg>
<span class="t s" style="left:46.5px;top:272.0px;height:16px;line-height:16px;">墙</span>
<div style="left:9px;top:288px;width:13px;height:12px;background:#fff"></div>
<svg style="left:12px;top:289px;" width="7" height="11" viewBox="0 0 7 11"><path d="M1 1L5.5 5.5L1 10" fill="none" stroke="#a6a6a6" stroke-width="1.7"/></svg>
<svg style="left:26px;top:286px;" width="16" height="16" viewBox="0 0 16 16"><defs><linearGradient id="fg286" x1="0" y1="0" x2="1" y2="1"><stop offset="0" stop-color="#fff3c0"/><stop offset="1" stop-color="#e6b040"/></linearGradient></defs><path d="M0.5 3.5H5.5L7 5H14.5V13.5H0.5Z" fill="url(#fg286)" stroke="#c09030"/></svg>
<span class="t s" style="left:46.5px;top:288.0px;height:16px;line-height:16px;">门窗洞</span>
<div style="left:9px;top:304px;width:13px;height:12px;background:#fff"></div>
<svg style="left:9.5px;top:307px;" width="11" height="8" viewBox="0 0 11 8"><path d="M1 1.5L5.5 6L10 1.5" fill="none" stroke="#303030" stroke-width="1.9"/></svg>
<svg style="left:26px;top:302px;" width="16" height="16" viewBox="0 0 16 16"><path d="M0.5 3.5H5.5L7 5H12.5V12.5H0.5Z" fill="#e2b04a" stroke="#b08020"/><path d="M0.5 12.5L3 7H15.5L13 12.5Z" fill="#fbe39a" stroke="#b08020"/></svg>
<span class="t s" style="left:46.5px;top:304.0px;height:16px;line-height:16px;">梁</span>
<div style="left:43px;top:318px;width:57px;height:16px;background:#d8d8d8"></div>
<svg style="left:45px;top:318px;" width="16" height="16" viewBox="0 0 16 16"><path d="M1.5 1.5H14.5V4.5L10 9V14.5H6V9L1.5 4.5Z" fill="#d8e8fa" stroke="#2a6ac8"/><path d="M3 3H13M8 6V13" stroke="#8ab0e8"/></svg>
<span class="t s" style="left:65.5px;top:320.0px;height:16px;line-height:16px;">梁<i>(L)</i></span>
<svg style="left:45px;top:334px;" width="16" height="16" viewBox="0 0 16 16"><path d="M4 1.5H14.5L12 14.5H1.5Z" fill="#fff" stroke="#1a3aa0" stroke-width="1.6"/><path d="M6.5 4H12L10.5 12H5Z" fill="#c8d8f8" stroke="#1a3aa0"/></svg>
<span class="t s" style="left:65.5px;top:336.0px;height:16px;line-height:16px;">圈梁<i>(E)</i></span>
<div style="left:9px;top:352px;width:13px;height:12px;background:#fff"></div>
<svg style="left:12px;top:353px;" width="7" height="11" viewBox="0 0 7 11"><path d="M1 1L5.5 5.5L1 10" fill="none" stroke="#a6a6a6" stroke-width="1.7"/></svg>
<svg style="left:26px;top:350px;" width="16" height="16" viewBox="0 0 16 16"><defs><linearGradient id="fg350" x1="0" y1="0" x2="1" y2="1"><stop offset="0" stop-color="#fff3c0"/><stop offset="1" stop-color="#e6b040"/></linearGradient></defs><path d="M0.5 3.5H5.5L7 5H14.5V13.5H0.5Z" fill="url(#fg350)" stroke="#c09030"/></svg>
<span class="t s" style="left:46.5px;top:352.0px;height:16px;line-height:16px;">板</span>
<div style="left:9px;top:368px;width:13px;height:12px;background:#fff"></div>
<svg style="left:9.5px;top:371px;" width="11" height="8" viewBox="0 0 11 8"><path d="M1 1.5L5.5 6L10 1.5" fill="none" stroke="#303030" stroke-width="1.9"/></svg>
<svg style="left:26px;top:366px;" width="16" height="16" viewBox="0 0 16 16"><path d="M0.5 3.5H5.5L7 5H12.5V12.5H0.5Z" fill="#e2b04a" stroke="#b08020"/><path d="M0.5 12.5L3 7H15.5L13 12.5Z" fill="#fbe39a" stroke="#b08020"/></svg>
<span class="t s" style="left:46.5px;top:368.0px;height:16px;line-height:16px;">基础</span>
<svg style="left:45px;top:382px;" width="16" height="16" viewBox="0 0 16 16"><path d="M1.5 14.5V11H4L8 2.5L14.5 1V9.5L11 14.5Z" fill="#b8c8e0" stroke="#2a4a80"/><path d="M8 2.5V14M11 5V14.5" stroke="#2a4a80"/></svg>
<span class="t s" style="left:65.5px;top:384.0px;height:16px;line-height:16px;">基础梁<i>(F)</i></span>
<svg style="left:45px;top:398px;" width="16" height="16" viewBox="0 0 16 16"><rect x="1.5" y="1.5" width="13" height="13" fill="#fff" stroke="#1a3aa0" stroke-width="1.4"/><path d="M1.5 5H14.5M1.5 11H14.5M5 1.5V14.5M11 1.5V14.5" stroke="#1a3aa0" stroke-width="1.3"/></svg>
<span class="t s" style="left:65.5px;top:400.0px;height:16px;line-height:16px;">筏板基础<i>(</i></span>
<svg style="left:45px;top:414px;" width="16" height="16" viewBox="0 0 16 16"><path d="M0.5 3.5H4L5.5 9H10.5L12 3.5H15.5" fill="none" stroke="#2a5ab0" stroke-width="1.3"/><path d="M2 6Q8 18 14 6L12 5L10.5 10H5.5L4 5Z" fill="#a8c0e8" stroke="#2a5ab0" stroke-dasharray="1 1"/></svg>
<span class="t s" style="left:65.5px;top:416.0px;height:16px;line-height:16px;">集水坑<i>(K)</i></span>
<svg style="left:45px;top:430px;" width="16" height="16" viewBox="0 0 16 16"><path d="M1 14.5H15V11.5H1Z" fill="#c0c0c8" stroke="#5a5a6a"/><path d="M5.5 11.5L6.5 5.5H9.5L10.5 11.5Z" fill="#b8c8f0" stroke="#2a4aa0"/><path d="M8 2V5.5" stroke="#2a4aa0"/></svg>
<span class="t s" style="left:65.5px;top:432.0px;height:16px;line-height:16px;">柱墩<i>(Y)</i></span>
<svg style="left:45px;top:446px;" width="16" height="16" viewBox="0 0 16 16"><rect x="1.5" y="1.5" width="13" height="13" fill="#fff" stroke="#2a5ac0" stroke-width="1.3"/><path d="M8 4V12M4 8H12M6 5Q8 3 10 5" fill="none" stroke="#2a5ac0" stroke-width="1.3"/></svg>
<span class="t s" style="left:65.5px;top:448.0px;height:16px;line-height:16px;">筏板主筋<i>(</i></span>
<svg style="left:45px;top:462px;" width="16" height="16" viewBox="0 0 16 16"><rect x="1.5" y="0.5" width="13" height="14" fill="#fff" stroke="#2a5ac0" stroke-width="1.3"/><path d="M8 2V12M4 7H12M4 7V10M12 7V10" fill="none" stroke="#2a5ac0" stroke-width="1.3"/></svg>
<span class="t s" style="left:65.5px;top:464.0px;height:16px;line-height:16px;">筏板负筋<i>(</i></span>
<svg style="left:45px;top:478px;" width="16" height="16" viewBox="0 0 16 16"><path d="M1 9L8 6L15 9V11.5L8 15L1 11.5Z" fill="#c8d8f0" stroke="#1a3a80"/><path d="M5 3.5L8 2L11 3.5V8L8 9.5L5 8Z" fill="#4a6ab8" stroke="#1a3a80"/></svg>
<span class="t s" style="left:65.5px;top:480.0px;height:16px;line-height:16px;">独立基础<i>(</i></span>
<svg style="left:45px;top:494px;" width="16" height="16" viewBox="0 0 16 16"><path d="M1 14.5V11.5H4L7 3L12 1.5L15 8V14.5Z" fill="#dfe8f8" stroke="#1a3a80" stroke-width="1.2"/><path d="M9 4L13 9V14" stroke="#1a3a80" fill="none"/></svg>
<span class="t s" style="left:65.5px;top:496.0px;height:16px;line-height:16px;">条形基础<i>(</i></span>
<svg style="left:45px;top:510px;" width="16" height="16" viewBox="0 0 16 16"><path d="M1 3.5H15V7.5H1Z" fill="#dfe8f8" stroke="#1a3a80" stroke-width="1.2"/><path d="M6 7.5V12L8 15L10 12V7.5" fill="#5a7ac0" stroke="#1a3a80"/></svg>
<span class="t s" style="left:65.5px;top:512.0px;height:16px;line-height:16px;">桩承台<i>(V)</i></span>
<svg style="left:45px;top:526px;" width="16" height="16" viewBox="0 0 16 16"><path d="M1.5 14.5V11H4L8 2.5L14.5 1V9.5L11 14.5Z" fill="#a8b8d8" stroke="#2a4a80"/><path d="M8 2.5V14M11 5V14.5" stroke="#2a4a80"/></svg>
<span class="t s" style="left:65.5px;top:528.0px;height:16px;line-height:16px;">承台梁<i>(F)</i></span>
<svg style="left:45px;top:542px;" width="16" height="16" viewBox="0 0 16 16"><path d="M6 1.5H10V7H13L8 14.5L3 7H6Z" fill="#c8d8f8" stroke="#1a3a80" stroke-width="1.2"/></svg>
<span class="t s" style="left:65.5px;top:544.0px;height:16px;line-height:16px;">桩<i>(U)</i></span>
<svg style="left:45px;top:558px;" width="16" height="16" viewBox="0 0 16 16"><path d="M1 2.5H15M1 13.5H15" stroke="#1a3a80" stroke-width="1.6"/><path d="M5 3V13M8 3V13M11 3V13" stroke="#3a6ac8" stroke-width="1.3"/></svg>
<span class="t s" style="left:65.5px;top:560.0px;height:16px;line-height:16px;">基础板带<i>(</i></span>
<div style="left:9px;top:576px;width:13px;height:12px;background:#fff"></div>
<svg style="left:12px;top:577px;" width="7" height="11" viewBox="0 0 7 11"><path d="M1 1L5.5 5.5L1 10" fill="none" stroke="#a6a6a6" stroke-width="1.7"/></svg>
<svg style="left:26px;top:574px;" width="16" height="16" viewBox="0 0 16 16"><defs><linearGradient id="fg574" x1="0" y1="0" x2="1" y2="1"><stop offset="0" stop-color="#fff3c0"/><stop offset="1" stop-color="#e6b040"/></linearGradient></defs><path d="M0.5 3.5H5.5L7 5H14.5V13.5H0.5Z" fill="url(#fg574)" stroke="#c09030"/></svg>
<span class="t s" style="left:46.5px;top:576.0px;height:16px;line-height:16px;">其它</span>
<div style="left:9px;top:592px;width:13px;height:12px;background:#fff"></div>
<svg style="left:9.5px;top:595px;" width="11" height="8" viewBox="0 0 11 8"><path d="M1 1.5L5.5 6L10 1.5" fill="none" stroke="#303030" stroke-width="1.9"/></svg>
<svg style="left:26px;top:590px;" width="16" height="16" viewBox="0 0 16 16"><path d="M0.5 3.5H5.5L7 5H12.5V12.5H0.5Z" fill="#e2b04a" stroke="#b08020"/><path d="M0.5 12.5L3 7H15.5L13 12.5Z" fill="#fbe39a" stroke="#b08020"/></svg>
<span class="t s" style="left:46.5px;top:592.0px;height:16px;line-height:16px;">自定义</span>
<svg style="left:45px;top:606px;" width="16" height="16" viewBox="0 0 16 16"><path d="M3 3L13 13M13 3L3 13" stroke="#2a5ac0" stroke-width="1.5"/><circle cx="8" cy="8" r="1.8" fill="#2a5ac0"/></svg>
<span class="t s" style="left:65.5px;top:608.0px;height:16px;line-height:16px;">自定义点</span>
<svg style="left:45px;top:622px;" width="16" height="16" viewBox="0 0 16 16"><rect x="2.5" y="2.5" width="11" height="11" fill="#fff" stroke="#1a3a80" stroke-width="1.2"/><rect x="1" y="1" width="3" height="3" fill="#3a7ae0"/><rect x="12" y="1" width="3" height="3" fill="#3a7ae0"/><rect x="1" y="12" width="3" height="3" fill="#3a7ae0"/><rect x="12" y="12" width="3" height="3" fill="#3a7ae0"/></svg>
<span class="t s" style="left:65.5px;top:624.0px;height:16px;line-height:16px;">自定义线<i>(</i></span>
<svg style="left:45px;top:638px;" width="16" height="16" viewBox="0 0 16 16"><path d="M2 3L5 0M6 3L9 0M10 3L13 0" stroke="#3a7ae0" stroke-width="1.3"/></svg>
<span class="t s" style="left:65.5px;top:640.0px;height:16px;line-height:16px;">自定义面<i>(</i></span>
<div style="left:120px;top:173px;width:15px;height:468.5px;background:#f0f0f0"></div>
<div style="left:120px;top:227.5px;width:15px;height:359px;background:#cdcdcd"></div>
<svg style="left:123px;top:178px;" width="9" height="7" viewBox="0 0 9 7"><path d="M1 6L4.5 2L8 6" fill="none" stroke="#505050" stroke-width="1.8"/></svg>
<svg style="left:123px;top:629.5px;" width="9" height="7" viewBox="0 0 9 7"><path d="M1 1L4.5 5L8 1" fill="none" stroke="#505050" stroke-width="1.8"/></svg>
<div style="left:3px;top:641.5px;width:134.5px;height:17px;background:#f0f0f0"></div>
<div style="left:21px;top:641.5px;width:72px;height:16px;background:#cdcdcd"></div>
<svg style="left:9px;top:645px;" width="7" height="9" viewBox="0 0 7 9"><path d="M6 1L2 4.5L6 8" fill="none" stroke="#505050" stroke-width="1.8"/></svg>
<svg style="left:107px;top:645px;" width="7" height="9" viewBox="0 0 7 9"><path d="M1 1L5 4.5L1 8" fill="none" stroke="#505050" stroke-width="1.8"/></svg>
<div style="left:140px;top:82px;width:4px;height:624px;background:#f0f0f0"></div>
<svg style="left:144px;top:168px;overflow:hidden" width="1221" height="305" viewBox="144 168 1221 305" shape-rendering="crispEdges"><style>.ct{font-family:"Liberation Sans",sans-serif}.xd{mix-blend-mode:difference}</style><rect x="144" y="168" width="1221" height="305" fill="#000"/><clipPath id="rooms"><rect x="264" y="181" width="218" height="49"/><rect x="262" y="168" width="220" height="1"/><rect x="262" y="270" width="218" height="52"/></clipPath><path clip-path="url(#rooms)" d="M266.70 166L102.70 330M282.65 166L118.65 330M298.60 166L134.60 330M314.55 166L150.55 330M330.50 166L166.50 330M346.45 166L182.45 330M362.40 166L198.40 330M378.35 166L214.35 330M394.30 166L230.30 330M410.25 166L246.25 330M426.20 166L262.20 330M442.15 166L278.15 330M458.10 166L294.10 330M474.05 166L310.05 330M490.00 166L326.00 330M505.95 166L341.95 330M521.90 166L357.90 330M537.85 166L373.85 330M553.80 166L389.80 330M569.75 166L405.75 330M585.70 166L421.70 330M601.65 166L437.65 330M617.60 166L453.60 330M633.55 166L469.55 330" stroke="#ffffff" stroke-width="1" fill="none" shape-rendering="geometricPrecision"/><rect x="188" y="176" width="4" height="57" fill="#00ff00"/><path d="M180 168H186.5L192 175V176H188Z" fill="#00ff00"/><rect x="144" y="233" width="110" height="8" fill="#00ff00"/><rect x="144" y="262" width="18" height="4" fill="#00ff00"/><path d="M163 265.5L166.5 265.5L192 241H186.5L163 263Z" fill="#00ff00"/><rect x="253" y="169" width="230" height="12" fill="#00ff00"/><rect x="264" y="230" width="218" height="3" fill="#c0c0c0"/><rect x="253" y="233" width="230" height="8" fill="#00ff00"/><rect x="264" y="241" width="218" height="2" fill="#c0c0c0"/><rect x="264" y="243" width="218" height="15" fill="#000"/><rect x="253" y="258" width="230" height="12" fill="#00ff00"/><rect x="253" y="168" width="11" height="102" fill="#00ff00"/><rect x="254" y="270" width="8" height="53" fill="#00ff00"/><rect x="329" y="258" width="8" height="65" fill="#00ff00"/><rect x="405" y="168" width="8" height="155" fill="#00ff00"/><rect x="482" y="168" width="5" height="155" fill="#00ff00"/><rect x="480" y="265" width="8" height="58" fill="#00ff00"/><rect x="259" y="176" width="222" height="1" fill="#ffffff"/><rect x="259" y="237" width="224" height="1" fill="#ffffff"/><rect x="259" y="263" width="224" height="1" fill="#ffffff"/><rect x="259" y="322" width="224" height="1" fill="#ffffff"/><rect x="482" y="265" width="1" height="58" fill="#ffffff"/><rect x="144" y="175" width="340" height="1" fill="#a00000"/><rect x="144" y="243" width="340" height="1" fill="#a00000"/><rect x="144" y="323" width="340" height="1" fill="#a00000"/><rect x="144" y="337" width="340" height="1" fill="#a00000"/><rect x="144" y="343" width="340" height="1" fill="#a00000"/><rect x="144" y="347" width="340" height="1" fill="#a00000"/><rect x="144" y="373" width="340" height="1" fill="#a00000"/><rect x="144" y="251" width="340" height="2" fill="#a00000"/><rect x="162" y="168" width="1" height="174" fill="#a00000"/><rect x="176" y="168" width="2" height="174" fill="#a00000"/><rect x="410" y="168" width="1" height="174" fill="#a00000"/><path d="M182 168L435 421" stroke="#a00000" stroke-width="1" fill="none"/><rect x="145" y="236" width="339" height="1" fill="#ff0000"/><rect x="145" y="264" width="339" height="1" fill="#ff0000"/><rect x="144" y="341" width="340" height="1" fill="#ff0000"/><rect x="257" y="168" width="2" height="174" fill="#ff0000"/><rect x="332" y="168" width="2" height="174" fill="#ff0000"/><rect x="483" y="168" width="2" height="174" fill="#ff0000"/><rect x="408" y="168" width="1" height="174" fill="#ff0000"/><rect x="414" y="168" width="1" height="168" fill="#008000"/><rect x="448" y="168" width="1" height="168" fill="#008000"/><path d="M404 334L412 342" stroke="#008000" stroke-width="1" fill="none"/><path d="M444 333L452 341" stroke="#008000" stroke-width="1" fill="none"/><path d="M444 228L452 236" stroke="#008000" stroke-width="1" fill="none"/><path d="M444 255L452 263" stroke="#008000" stroke-width="1" fill="none"/><rect x="255" y="232" width="2" height="4" fill="#8000ff"/><rect x="259" y="234" width="6" height="2" fill="#8000ff"/><rect x="256" y="328" width="1" height="11" fill="#8000ff"/><rect x="259" y="328" width="2" height="11" fill="#8000ff"/><rect x="259" y="335" width="20" height="2" fill="#8000ff"/><rect x="259" y="338" width="20" height="1" fill="#8000ff"/><rect x="328" y="334" width="4" height="3" fill="#0080ff"/><rect x="328" y="338" width="4" height="3" fill="#0080ff"/><rect x="404" y="334" width="4" height="3" fill="#0080ff"/><rect x="404" y="338" width="4" height="3" fill="#0080ff"/><rect x="409" y="334" width="5" height="3" fill="#0080ff"/><rect x="409" y="338" width="5" height="3" fill="#0080ff"/><rect x="350" y="335" width="55" height="2" fill="#00ff00"/><rect x="350" y="338" width="55" height="1" fill="#00ff00"/><rect x="370" y="270" width="2" height="47" fill="#ffffff"/><path d="M371 270.5L376 275" stroke="#ffffff" stroke-width="1.4" fill="none"/><rect x="333" y="336" width="17" height="7" fill="#f4f4f4"/><rect x="331" y="342" width="8" height="5" fill="#00ff00"/><rect x="337" y="343" width="9" height="4" fill="#e8e8e8"/><ellipse cx="341" cy="331" rx="5.3" ry="2.8" fill="none" stroke="#f0f0f0" stroke-width="1.4"/><circle cx="342.5" cy="339.5" r="2.6" fill="none" stroke="#333" stroke-width="1.3"/><path d="M336 345L343 346L340 349" fill="none" stroke="#333" stroke-width="1.2"/><circle cx="157.1" cy="181.1" r="12.5" fill="none" stroke="#008000" stroke-width="1.1"/><text transform="translate(157.1 186.4) scale(0.85 1)" font-size="15" fill="#e4e4e4" stroke="#e4e4e4" stroke-width="0.3" text-anchor="middle" class="ct xd">C</text><circle cx="157.1" cy="236.7" r="12.5" fill="none" stroke="#008000" stroke-width="1.1"/><text transform="translate(157.1 242.0) scale(0.85 1)" font-size="15" fill="#e4e4e4" stroke="#e4e4e4" stroke-width="0.3" text-anchor="middle" class="ct xd">B</text><circle cx="157.1" cy="264.8" r="12.5" fill="none" stroke="#008000" stroke-width="1.1"/><text transform="translate(157.1 270.1) scale(0.85 1)" font-size="15" fill="#e4e4e4" stroke="#e4e4e4" stroke-width="0.3" text-anchor="middle" class="ct xd">A</text><circle cx="156.5" cy="341.3" r="12.5" fill="none" stroke="#008000" stroke-width="1.1"/><text transform="translate(156.5 346.6) scale(0.85 1)" font-size="15" fill="#e4e4e4" stroke="#e4e4e4" stroke-width="0.3" text-anchor="middle" class="ct xd">A1</text><circle cx="258.3" cy="181" r="12.5" fill="none" stroke="#008000" stroke-width="1.1"/><text transform="translate(258.3 186.3) scale(0.85 1)" font-size="15" fill="#e4e4e4" stroke="#e4e4e4" stroke-width="0.3" text-anchor="middle" class="ct xd">5</text><circle cx="334" cy="181" r="12.5" fill="none" stroke="#008000" stroke-width="1.1"/><text transform="translate(334 186.3) scale(0.85 1)" font-size="15" fill="#e4e4e4" stroke="#e4e4e4" stroke-width="0.3" text-anchor="middle" class="ct xd">5</text><circle cx="367.3" cy="181" r="12.5" fill="none" stroke="#008000" stroke-width="1.1"/><text transform="translate(367.3 186.3) scale(0.85 1)" font-size="15" fill="#e4e4e4" stroke="#e4e4e4" stroke-width="0.3" text-anchor="middle" class="ct xd">C</text><circle cx="409.3" cy="181" r="12.5" fill="none" stroke="#008000" stroke-width="1.1"/><text transform="translate(409.3 186.3) scale(0.85 1)" font-size="15" fill="#e4e4e4" stroke="#e4e4e4" stroke-width="0.3" text-anchor="middle" class="ct xd">7</text><circle cx="484" cy="181" r="12.5" fill="none" stroke="#008000" stroke-width="1.1"/><text transform="translate(484 186.3) scale(0.85 1)" font-size="15" fill="#e4e4e4" stroke="#e4e4e4" stroke-width="0.3" text-anchor="middle" class="ct xd">8</text><circle cx="367.3" cy="231.5" r="12.5" fill="none" stroke="#008000" stroke-width="1.1"/><text transform="translate(367.3 236.8) scale(0.85 1)" font-size="15" fill="#e4e4e4" stroke="#e4e4e4" stroke-width="0.3" text-anchor="middle" class="ct xd">B</text><circle cx="367.3" cy="259" r="12.5" fill="none" stroke="#008000" stroke-width="1.1"/><text transform="translate(367.3 264.3) scale(0.85 1)" font-size="15" fill="#e4e4e4" stroke="#e4e4e4" stroke-width="0.3" text-anchor="middle" class="ct xd">A</text><circle cx="367.3" cy="337.5" r="12.5" fill="none" stroke="#008000" stroke-width="1.1"/><text transform="translate(367.3 342.8) scale(0.85 1)" font-size="15" fill="#e4e4e4" stroke="#e4e4e4" stroke-width="0.3" text-anchor="middle" class="ct xd">A1</text><text transform="translate(430.5 187) rotate(-80) scale(0.9 1)" font-size="15" fill="#e4e4e4" stroke="#e4e4e4" stroke-width="0.35" text-anchor="middle" class="ct xd">1360</text><text transform="translate(465 200) rotate(-90) scale(0.9 1)" font-size="17" fill="#e4e4e4" stroke="#e4e4e4" stroke-width="0.35" text-anchor="middle" class="ct xd">2680</text><text transform="translate(465 243) rotate(-90) scale(0.9 1)" font-size="17" fill="#e4e4e4" stroke="#e4e4e4" stroke-width="0.35" text-anchor="middle" class="ct xd">1200</text><text transform="translate(465 297) rotate(-90) scale(0.9 1)" font-size="17" fill="#e4e4e4" stroke="#e4e4e4" stroke-width="0.35" text-anchor="middle" class="ct xd">3400</text><path d="M1029.4 198.8L968.3 241.6L1011 302.4L1072.7 259.2Z" fill="#a8c464"/><path d="M1106 168L1097 175L1148.3 250.2L1223 198.4L1202.5 168Z" fill="#a8c464"/><rect x="492" y="170" width="594" height="1" fill="#ff0000"/><rect x="484" y="232" width="602" height="1" fill="#ff0000"/><rect x="484" y="259" width="602" height="1" fill="#ff0000"/><rect x="484" y="337" width="602" height="1" fill="#ff0000"/><rect x="558" y="168" width="1" height="170" fill="#ff0000"/><rect x="633" y="168" width="1" height="170" fill="#ff0000"/><rect x="709" y="168" width="1" height="170" fill="#ff0000"/><rect x="859" y="168" width="1" height="170" fill="#ff0000"/><rect x="935" y="168" width="1" height="170" fill="#ff0000"/><rect x="1010" y="168" width="1" height="170" fill="#ff0000"/><rect x="1085" y="168" width="1" height="170" fill="#ff0000"/><rect x="705" y="168" width="159" height="6" fill="#0000a8"/><rect x="705" y="168" width="9" height="6" fill="#0080ff"/><rect x="855" y="168" width="9" height="6" fill="#0080ff"/><rect x="1006" y="168" width="9" height="6" fill="#0080ff"/><rect x="700" y="170" width="170" height="1" fill="#ff0000"/><rect x="709" y="168" width="1" height="6" fill="#ff0000"/><rect x="859" y="168" width="1" height="6" fill="#ff0000"/><rect x="1010" y="168" width="1" height="6" fill="#ff0000"/><rect x="484" y="333" width="372" height="8" fill="#0080ff"/><rect x="480" y="337" width="606" height="1" fill="#ff0000"/><rect x="555" y="333" width="8" height="8" fill="#ff8000"/><rect x="555" y="337" width="8" height="1" fill="#00e0e0"/><rect x="630" y="333" width="8" height="8" fill="#ff8000"/><rect x="630" y="337" width="8" height="1" fill="#00e0e0"/><rect x="743" y="333" width="8" height="8" fill="#ff8000"/><rect x="743" y="337" width="8" height="1" fill="#00e0e0"/><rect x="558" y="333" width="1" height="4" fill="#00e0e0"/><rect x="633" y="333" width="1" height="4" fill="#00e0e0"/><rect x="479" y="333" width="8" height="8" fill="#fff"/><rect x="480" y="333" width="2" height="2" fill="#ff8000"/><rect x="485" y="333" width="2" height="4" fill="#ff8000"/><rect x="480" y="339" width="3" height="2" fill="#ff8000"/><path d="M480 339L483 333.5L486 339Z" fill="#0000e0"/><rect x="480" y="338" width="6" height="2" fill="#0000e0"/><rect x="483" y="333" width="1" height="9" fill="#40e0e0"/><rect x="480" y="337" width="7" height="1" fill="#40e0e0"/><rect x="478" y="339" width="1" height="1" fill="#ffe000"/><rect x="482" y="332" width="1" height="1" fill="#ffe000"/><rect x="487" y="339" width="1" height="1" fill="#ffe000"/><rect x="856" y="333" width="8" height="8" fill="#fff"/><rect x="857" y="333" width="2" height="2" fill="#ff8000"/><rect x="862" y="333" width="2" height="4" fill="#ff8000"/><rect x="857" y="339" width="3" height="2" fill="#ff8000"/><path d="M857 339L860 333.5L863 339Z" fill="#0000e0"/><rect x="857" y="338" width="6" height="2" fill="#0000e0"/><rect x="860" y="333" width="1" height="9" fill="#40e0e0"/><rect x="857" y="337" width="7" height="1" fill="#40e0e0"/><rect x="855" y="339" width="1" height="1" fill="#ffe000"/><rect x="859" y="332" width="1" height="1" fill="#ffe000"/><rect x="864" y="339" width="1" height="1" fill="#ffe000"/><rect x="551" y="252" width="15" height="5" fill="#8000ff"/><rect x="551" y="252" width="5" height="15" fill="#8000ff"/><rect x="624" y="250" width="20" height="6" fill="#8000ff"/><rect x="638" y="250" width="6" height="19" fill="#8000ff"/><rect x="484" y="259" width="602" height="1" fill="#ff0000"/><rect x="558" y="250" width="1" height="20" fill="#ff0000"/><rect x="633" y="250" width="1" height="20" fill="#ff0000"/><rect x="609" y="320" width="1.6" height="13" fill="#ffffff"/><rect x="609" y="333" width="2" height="4" fill="#ff8000"/><text x="610.3" y="322" font-size="3.6" fill="#d0d0d0" class="ct">KL-3 350*550</text><text x="610.3" y="325.8" font-size="3.6" fill="#d0d0d0" class="ct">C8@100/200(2) 2C25;4C25</text><text x="662.3" y="347" font-size="3.3" fill="#909090" class="ct">200*500</text><circle cx="558.5" cy="181" r="12.5" fill="none" stroke="#008000" stroke-width="1.1"/><text transform="translate(558.5 186.3) scale(0.85 1)" font-size="15" fill="#e4e4e4" stroke="#e4e4e4" stroke-width="0.3" text-anchor="middle" class="ct xd">2</text><circle cx="633.5" cy="181" r="12.5" fill="none" stroke="#008000" stroke-width="1.1"/><text transform="translate(633.5 186.3) scale(0.85 1)" font-size="15" fill="#e4e4e4" stroke="#e4e4e4" stroke-width="0.3" text-anchor="middle" class="ct xd">3</text><circle cx="709.5" cy="181" r="12.5" fill="none" stroke="#008000" stroke-width="1.1"/><text transform="translate(709.5 186.3) scale(0.85 1)" font-size="15" fill="#e4e4e4" stroke="#e4e4e4" stroke-width="0.3" text-anchor="middle" class="ct xd">4</text><circle cx="860" cy="181" r="12.5" fill="none" stroke="#008000" stroke-width="1.1"/><text transform="translate(860 186.3) scale(0.85 1)" font-size="15" fill="#e4e4e4" stroke="#e4e4e4" stroke-width="0.3" text-anchor="middle" class="ct xd">5</text><clipPath id="strip"><path d="M1238 168L1265.6 207.2L1323 168Z"/></clipPath><path clip-path="url(#strip)" d="M1259.50 160L1204.50 215M1275.50 160L1220.50 215M1291.50 160L1236.50 215M1307.50 160L1252.50 215M1323.50 160L1268.50 215M1339.50 160L1284.50 215" stroke="#c8c8c8" stroke-width="1" fill="none" shape-rendering="geometricPrecision"/><path d="M1131.5 224.8L1205.4 173.5" stroke="#c060c0" stroke-width="1.8" fill="none"/><path d="M1164.4 168.1L1198.1 216" stroke="#c060c0" stroke-width="1.8" fill="none"/><path d="M998.3 282.2L1058.3 239.5" stroke="#c060c0" stroke-width="1.8" fill="none"/><path d="M1009 213L1052 276" stroke="#c060c0" stroke-width="1.8" fill="none"/><path d="M1323 168L1080 337.5" stroke="#ff0000" stroke-width="1" fill="none"/><path d="M962.5 168L1080 337.5" stroke="#ff0000" stroke-width="1" fill="none"/><path d="M1054.6 168L1142.5 293.5" stroke="#ff0000" stroke-width="1" fill="none"/><path d="M1145.4 168L1203.3 250.6" stroke="#ff0000" stroke-width="1" fill="none"/><path d="M1237.7 168L1265.6 207.2" stroke="#ff0000" stroke-width="1" fill="none"/><path d="M1237.7 168L1265.6 207.2L1323 168" stroke="#fff" stroke-width="1" stroke-dasharray="1.5 1.5" fill="none"/><path d="M985.9 199.9L1032 168" stroke="#ff0000" stroke-width="1" fill="none"/><path d="M1139.6 168L1006 260.5" stroke="#ff0000" stroke-width="1" fill="none"/><path d="M1186.4 168L1037 271.5" stroke="#ff0000" stroke-width="1" fill="none"/><path d="M879 168L1024 377.5" stroke="#008000" stroke-width="1" fill="none"/><path d="M920.8 168L1053 357" stroke="#008000" stroke-width="1" fill="none"/><path d="M903.9 257.7L985.9 200.6" stroke="#008000" stroke-width="1" fill="none"/><path d="M849 186.7L880 167" stroke="#008000" stroke-width="1" fill="none"/><path d="M936 309.5L1010 258" stroke="#008000" stroke-width="1" fill="none"/><path d="M952.4 331.6L1036 272.5" stroke="#008000" stroke-width="1" fill="none"/><path d="M996.4 396L1080 337.5" stroke="#008000" stroke-width="1" fill="none"/><path d="M949.5 219.5L963.5 221.5" stroke="#008000" stroke-width="1" fill="none"/><path d="M1001 292.5L1015 294.5" stroke="#008000" stroke-width="1" fill="none"/><path d="M1045 355.5L1059 357.5" stroke="#008000" stroke-width="1" fill="none"/><path d="M1016.5 375.8L1030.5 377.8" stroke="#008000" stroke-width="1" fill="none"/><path d="M985 270L999 272" stroke="#008000" stroke-width="1" fill="none"/><text transform="translate(937.5 180.5) rotate(55) scale(1.04 1)" font-size="16" fill="#e4e4e4" stroke="#e4e4e4" stroke-width="0.35" text-anchor="middle" class="ct xd">920</text><text transform="translate(943 247) rotate(55) scale(1.04 1)" font-size="16" fill="#e4e4e4" stroke="#e4e4e4" stroke-width="0.35" text-anchor="middle" class="ct xd">13600</text><text transform="translate(982.5 241) rotate(55) scale(1.04 1)" font-size="16" fill="#e4e4e4" stroke="#e4e4e4" stroke-width="0.35" text-anchor="middle" class="ct xd">2680</text><text transform="translate(1008 281) rotate(55) scale(1.04 1)" font-size="16" fill="#e4e4e4" stroke="#e4e4e4" stroke-width="0.35" text-anchor="middle" class="ct xd">1200</text><text transform="translate(1038 323) rotate(55) scale(1.04 1)" font-size="16" fill="#e4e4e4" stroke="#e4e4e4" stroke-width="0.35" text-anchor="middle" class="ct xd">3400</text><circle cx="934.7" cy="181" r="12.5" fill="none" stroke="#008000" stroke-width="1.1"/><text transform="translate(934.7 186.3) scale(0.85 1)" font-size="15" fill="#e4e4e4" stroke="#e4e4e4" stroke-width="0.3" text-anchor="middle" class="ct xd">6</text><circle cx="971.3" cy="181" r="12.5" fill="none" stroke="#008000" stroke-width="1.1"/><text transform="translate(971.3 186.3) scale(0.85 1)" font-size="15" fill="#e4e4e4" stroke="#e4e4e4" stroke-width="0.3" text-anchor="middle" class="ct xd">1</text><circle cx="1010.4" cy="181" r="12.5" fill="none" stroke="#008000" stroke-width="1.1"/><text transform="translate(1010.4 186.3) scale(0.85 1)" font-size="15" fill="#e4e4e4" stroke="#e4e4e4" stroke-width="0.3" text-anchor="middle" class="ct xd">7</text><circle cx="1062.7" cy="181" r="12.5" fill="none" stroke="#008000" stroke-width="1.1"/><text transform="translate(1062.7 186.3) scale(0.85 1)" font-size="15" fill="#e4e4e4" stroke="#e4e4e4" stroke-width="0.3" text-anchor="middle" class="ct xd">2</text><circle cx="1085.8" cy="181" r="12.5" fill="none" stroke="#008000" stroke-width="1.1"/><text transform="translate(1085.8 186.3) scale(0.85 1)" font-size="15" fill="#e4e4e4" stroke="#e4e4e4" stroke-width="0.3" text-anchor="middle" class="ct xd">8</text><circle cx="1154.6" cy="181" r="12.5" fill="none" stroke="#008000" stroke-width="1.1"/><text transform="translate(1154.6 186.3) scale(0.85 1)" font-size="15" fill="#e4e4e4" stroke="#e4e4e4" stroke-width="0.3" text-anchor="middle" class="ct xd">3</text><circle cx="1246.5" cy="181" r="12.5" fill="none" stroke="#008000" stroke-width="1.1"/><text transform="translate(1246.5 186.3) scale(0.85 1)" font-size="15" fill="#b0b0b0" stroke="#b0b0b0" stroke-width="0.3" text-anchor="middle" class="ct xd">4</text><circle cx="890.3" cy="266.5" r="12.5" fill="none" stroke="#008000" stroke-width="1.1"/><text transform="translate(890.3 271.8) scale(0.85 1)" font-size="15" fill="#e4e4e4" stroke="#e4e4e4" stroke-width="0.3" text-anchor="middle" class="ct xd">C</text><circle cx="925.2" cy="317.4" r="12.5" fill="none" stroke="#008000" stroke-width="1.1"/><text transform="translate(925.2 322.7) scale(0.85 1)" font-size="15" fill="#e4e4e4" stroke="#e4e4e4" stroke-width="0.3" text-anchor="middle" class="ct xd">B</text><circle cx="941" cy="340" r="12.5" fill="none" stroke="#008000" stroke-width="1.1"/><text transform="translate(941 345.3) scale(0.85 1)" font-size="15" fill="#e4e4e4" stroke="#e4e4e4" stroke-width="0.3" text-anchor="middle" class="ct xd">A</text><circle cx="985.5" cy="403.7" r="12.5" fill="none" stroke="#008000" stroke-width="1.1"/><text transform="translate(985.5 409.0) scale(0.85 1)" font-size="15" fill="#e4e4e4" stroke="#e4e4e4" stroke-width="0.3" text-anchor="middle" class="ct xd">A1</text><rect x="197" y="376" width="4" height="47" fill="#00ff00"/><path d="M195 385.5L198 374H200L203 385.5Z" fill="#00ff00"/><rect x="199" y="421" width="39" height="4" fill="#ff0000"/><path d="M236 419L248 422.5V423.5L236 428Z" fill="#ff0000"/><path d="M208 377L212.5 382L218 377M212.5 382V386" stroke="#00ff00" fill="none"/><path d="M236 402L245.5 412M245.5 402L236 412" stroke="#ff0000" fill="none"/></svg>
<div style="left:146px;top:474px;width:210px;height:27px;background:linear-gradient(#fcfcfc,#f2f2f2);border-radius:3px;"></div>
<div style="left:621px;top:474px;width:410px;height:27px;background:linear-gradient(#fcfcfc,#f2f2f2);border-radius:3px;"></div>
<div style="left:203px;top:476px;width:74.5px;height:22.5px;background:#deebf7;border:1.3px solid #1f80dd"></div>
<div style="left:277px;top:476px;width:75.5px;height:22.5px;background:#deebf7;border:1.3px solid #1f80dd"></div>
<svg style="left:148px;top:480px;shape-rendering:crispEdges" width="2" height="14" viewBox="0 0 2 14"><rect x="0" y="0" width="2" height="2" fill="#b0b0b0"/><rect x="0" y="4" width="2" height="2" fill="#b0b0b0"/><rect x="0" y="8" width="2" height="2" fill="#b0b0b0"/><rect x="0" y="12" width="2" height="2" fill="#b0b0b0"/></svg>
<svg style="left:155px;top:479px;" width="16" height="16" viewBox="0 0 16 16"><path d="M0 3.5H15M3.5 0.5V16" stroke="#e2a0a0" stroke-width="2.8" fill="none"/><path d="M7.5 7L9 12L10.5 11L13.5 14.8L14.8 13.8L12 10L13 8.5Z" fill="#e8eef8" stroke="#6a7a98" stroke-width="0.9"/></svg>
<span class="t y" style="left:175px;top:478.0px;height:20px;line-height:20px;">正交</span>
<svg style="left:206px;top:479px;" width="16" height="16" viewBox="0 0 16 16"><path d="M2.5 1V14M12.5 1V10" stroke="#8a3a3a" stroke-width="1.2"/><path d="M0.5 7.5L2.5 5.5L4.5 7.5L2.5 9.5ZM10.5 7.5L12.5 5.5L14.5 7.5L12.5 9.5Z" fill="#8a3a3a"/><path d="M4 13Q4 8.5 9 8Q14.5 8 15 12Q15 15.5 11 15.8H6Q4 15.3 4 13Z" fill="#ecc858" stroke="#8a6a1a" stroke-width="0.8"/><path d="M6 11.5Q9 9.5 12 11.5" stroke="#a88420" fill="none" stroke-width="0.8"/></svg>
<span class="t y" style="left:226px;top:478.0px;height:20px;line-height:20px;">对象捕捉</span>
<svg style="left:281px;top:479px;" width="16" height="16" viewBox="0 0 16 16"><path d="M1.5 0.5V9M14.5 0.5V15.5" stroke="#7a7a80" stroke-width="1.2"/><path d="M1.5 3.5H14.5" stroke="#c07070" stroke-width="1.3"/><rect x="3.5" y="8.5" width="11" height="7" fill="#fff" stroke="#555" stroke-width="1.1"/><text x="9" y="14.5" font-size="6.5" font-family="Liberation Sans,sans-serif" text-anchor="middle" fill="#000" font-weight="bold">12</text></svg>
<span class="t y" style="left:301px;top:478.0px;height:20px;line-height:20px;">动态输入</span>
<svg style="left:623px;top:480px;shape-rendering:crispEdges" width="2" height="14" viewBox="0 0 2 14"><rect x="0" y="0" width="2" height="2" fill="#b0b0b0"/><rect x="0" y="4" width="2" height="2" fill="#b0b0b0"/><rect x="0" y="8" width="2" height="2" fill="#b0b0b0"/><rect x="0" y="12" width="2" height="2" fill="#b0b0b0"/></svg>
<div style="left:628px;top:475.5px;width:58px;height:24px;background:#fff"></div>
<div style="left:674px;top:475.5px;width:12px;height:24px;background:linear-gradient(#fdfdfd,#f0f0f0)"></div>
<span class="t y" style="left:631px;top:478.0px;height:20px;line-height:20px;">不偏移</span>
<svg style="left:677.5px;top:486.5px;shape-rendering:crispEdges" width="5" height="3" viewBox="0 0 5 3"><path d="M0 0H5L2.5 3Z" fill="#000"/></svg>
<div style="left:691px;top:480.5px;width:1px;height:14px;background:#bdbdbd"></div>
<span class="t y" style="left:694px;top:478.0px;height:20px;line-height:20px;color:#6d6d6d;font-size:12.5px;letter-spacing:0.6px">X=</span>
<div style="left:713px;top:477px;width:58px;height:22.5px;background:#f0f0f0;border:1px solid #404040"></div>
<span class="t y" style="left:746px;top:479.25px;height:20px;line-height:20px;color:#6d6d6d;font-size:12.5px;">0</span>
<svg style="left:760px;top:480px;" width="7" height="16.5" viewBox="0 0 7 16.5"><path d="M0.5 4L3.5 0.5L6.5 4Z" fill="#444"/><path d="M0.5 12.5L3.5 16.0L6.5 12.5Z" fill="#444"/></svg>
<span class="t y" style="left:772px;top:478.0px;height:20px;line-height:20px;color:#6d6d6d;font-size:12.5px;letter-spacing:0.8px">mm Y=</span>
<div style="left:817px;top:477px;width:58px;height:22.5px;background:#f0f0f0;border:1px solid #404040"></div>
<span class="t y" style="left:850px;top:479.25px;height:20px;line-height:20px;color:#6d6d6d;font-size:12.5px;">0</span>
<svg style="left:864px;top:480px;" width="7" height="16.5" viewBox="0 0 7 16.5"><path d="M0.5 4L3.5 0.5L6.5 4Z" fill="#444"/><path d="M0.5 12.5L3.5 16.0L6.5 12.5Z" fill="#444"/></svg>
<span class="t y" style="left:876px;top:478.0px;height:20px;line-height:20px;color:#6d6d6d;font-size:12.5px;letter-spacing:0.8px">mm</span>
<div style="left:902px;top:480.5px;width:1px;height:14px;background:#bdbdbd"></div>
<div style="left:906px;top:481px;width:11.5px;height:11.5px;background:#f4f4f4;border:1px solid #8a8a8a"></div>
<span class="t y" style="left:926px;top:478.0px;height:20px;line-height:20px;">旋转</span>
<div style="left:954px;top:477px;width:68px;height:22.5px;background:#f0f0f0;border:1px solid #404040"></div>
<span class="t y" style="left:972px;top:479.25px;height:20px;line-height:20px;color:#6d6d6d;font-size:12.5px;">0.000</span>
<svg style="left:1011px;top:480px;" width="7" height="16.5" viewBox="0 0 7 16.5"><path d="M0.5 4L3.5 0.5L6.5 4Z" fill="#444"/><path d="M0.5 12.5L3.5 16.0L6.5 12.5Z" fill="#444"/></svg>
<span class="t y" style="left:1024px;top:478.0px;height:20px;line-height:20px;color:#6d6d6d">°</span>
<svg style="left:145px;top:506.8px;" width="10" height="10" viewBox="0 0 10 10"><rect x="0.5" y="0.5" width="9" height="9" fill="#fff" stroke="#8a3030"/><rect x="1" y="1" width="8" height="2" fill="#f08080"/><path d="M1.5 2.5L8.5 8.5M8.5 2.5L1.5 8.5" stroke="#3a3a4a" stroke-width="1.1"/></svg>
<svg style="left:146px;top:521px;shape-rendering:crispEdges" width="6" height="184" viewBox="0 0 6 184"><rect x="0" y="0" width="2" height="2" fill="#bcbcbc"/><rect x="4" y="0" width="2" height="2" fill="#bcbcbc"/><rect x="0" y="5" width="2" height="2" fill="#bcbcbc"/><rect x="4" y="5" width="2" height="2" fill="#bcbcbc"/><rect x="0" y="10" width="2" height="2" fill="#bcbcbc"/><rect x="4" y="10" width="2" height="2" fill="#bcbcbc"/><rect x="0" y="15" width="2" height="2" fill="#bcbcbc"/><rect x="4" y="15" width="2" height="2" fill="#bcbcbc"/><rect x="0" y="20" width="2" height="2" fill="#bcbcbc"/><rect x="4" y="20" width="2" height="2" fill="#bcbcbc"/><rect x="0" y="25" width="2" height="2" fill="#bcbcbc"/><rect x="4" y="25" width="2" height="2" fill="#bcbcbc"/><rect x="0" y="30" width="2" height="2" fill="#bcbcbc"/><rect x="4" y="30" width="2" height="2" fill="#bcbcbc"/><rect x="0" y="35" width="2" height="2" fill="#bcbcbc"/><rect x="4" y="35" width="2" height="2" fill="#bcbcbc"/><rect x="0" y="40" width="2" height="2" fill="#bcbcbc"/><rect x="4" y="40" width="2" height="2" fill="#bcbcbc"/><rect x="0" y="45" width="2" height="2" fill="#bcbcbc"/><rect x="4" y="45" width="2" height="2" fill="#bcbcbc"/><rect x="0" y="50" width="2" height="2" fill="#bcbcbc"/><rect x="4" y="50" width="2" height="2" fill="#bcbcbc"/><rect x="0" y="55" width="2" height="2" fill="#bcbcbc"/><rect x="4" y="55" width="2" height="2" fill="#bcbcbc"/><rect x="0" y="60" width="2" height="2" fill="#bcbcbc"/><rect x="4" y="60" width="2" height="2" fill="#bcbcbc"/><rect x="0" y="65" width="2" height="2" fill="#bcbcbc"/><rect x="4" y="65" width="2" height="2" fill="#bcbcbc"/><rect x="0" y="70" width="2" height="2" fill="#bcbcbc"/><rect x="4" y="70" width="2" height="2" fill="#bcbcbc"/><rect x="0" y="75" width="2" height="2" fill="#bcbcbc"/><rect x="4" y="75" width="2" height="2" fill="#bcbcbc"/><rect x="0" y="80" width="2" height="2" fill="#bcbcbc"/><rect x="4" y="80" width="2" height="2" fill="#bcbcbc"/><rect x="0" y="85" width="2" height="2" fill="#bcbcbc"/><rect x="4" y="85" width="2" height="2" fill="#bcbcbc"/><rect x="0" y="90" width="2" height="2" fill="#bcbcbc"/><rect x="4" y="90" width="2" height="2" fill="#bcbcbc"/><rect x="0" y="95" width="2" height="2" fill="#bcbcbc"/><rect x="4" y="95" width="2" height="2" fill="#bcbcbc"/><rect x="0" y="100" width="2" height="2" fill="#bcbcbc"/><rect x="4" y="100" width="2" height="2" fill="#bcbcbc"/><rect x="0" y="105" width="2" height="2" fill="#bcbcbc"/><rect x="4" y="105" width="2" height="2" fill="#bcbcbc"/><rect x="0" y="110" width="2" height="2" fill="#bcbcbc"/><rect x="4" y="110" width="2" height="2" fill="#bcbcbc"/><rect x="0" y="115" width="2" height="2" fill="#bcbcbc"/><rect x="4" y="115" width="2" height="2" fill="#bcbcbc"/><rect x="0" y="120" width="2" height="2" fill="#bcbcbc"/><rect x="4" y="120" width="2" height="2" fill="#bcbcbc"/><rect x="0" y="125" width="2" height="2" fill="#bcbcbc"/><rect x="4" y="125" width="2" height="2" fill="#bcbcbc"/><rect x="0" y="130" width="2" height="2" fill="#bcbcbc"/><rect x="4" y="130" width="2" height="2" fill="#bcbcbc"/><rect x="0" y="135" width="2" height="2" fill="#bcbcbc"/><rect x="4" y="135" width="2" height="2" fill="#bcbcbc"/><rect x="0" y="140" width="2" height="2" fill="#bcbcbc"/><rect x="4" y="140" width="2" height="2" fill="#bcbcbc"/><rect x="0" y="145" width="2" height="2" fill="#bcbcbc"/><rect x="4" y="145" width="2" height="2" fill="#bcbcbc"/><rect x="0" y="150" width="2" height="2" fill="#bcbcbc"/><rect x="4" y="150" width="2" height="2" fill="#bcbcbc"/><rect x="0" y="155" width="2" height="2" fill="#bcbcbc"/><rect x="4" y="155" width="2" height="2" fill="#bcbcbc"/><rect x="0" y="160" width="2" height="2" fill="#bcbcbc"/><rect x="4" y="160" width="2" height="2" fill="#bcbcbc"/><rect x="0" y="165" width="2" height="2" fill="#bcbcbc"/><rect x="4" y="165" width="2" height="2" fill="#bcbcbc"/><rect x="0" y="170" width="2" height="2" fill="#bcbcbc"/><rect x="4" y="170" width="2" height="2" fill="#bcbcbc"/><rect x="0" y="175" width="2" height="2" fill="#bcbcbc"/><rect x="4" y="175" width="2" height="2" fill="#bcbcbc"/><rect x="0" y="180" width="2" height="2" fill="#bcbcbc"/><rect x="4" y="180" width="2" height="2" fill="#bcbcbc"/></svg>
<div style="left:157px;top:507px;width:1209px;height:26px;background:linear-gradient(#fcfcfc,#f2f2f2);border-radius:3px;"></div>
<svg style="left:162px;top:512px;" width="140" height="14" viewBox="0 0 140 14"><path d="M1.5 1V13" stroke="#b8b8b8" stroke-width="1.6"/><path d="M9.5 1L3 7L9.5 13Z" fill="#c4c4c4"/><path d="M33 1.5L27 7L33 12.5Z" fill="#c4c4c4"/><path d="M50 1L57.5 7L50 13Z" fill="#2f6fe0"/><path d="M72.5 1L79.5 7L72.5 13Z" fill="#2f6fe0"/><path d="M81 1V13" stroke="#2f6fe0" stroke-width="1.8"/><path d="M104 2.5L108.2 6.8H106V11H102V6.8H99.8Z" fill="#d8d8d8" stroke="#c4c4c4" stroke-width="0.8"/><path d="M127.5 11.5L131.7 7.2H129.5V3H125.5V7.2H123.3Z" fill="#3a7ae8" stroke="#2f62c8" stroke-width="0.8"/></svg>
<div style="left:253px;top:512.5px;width:1px;height:14px;background:#bdbdbd"></div>
<div style="left:305px;top:512.5px;width:1px;height:14px;background:#bdbdbd"></div>
<div style="left:730px;top:512.5px;width:1px;height:14px;background:#bdbdbd"></div>
<svg style="left:310px;top:511px;" width="16" height="16" viewBox="0 0 16 16"><path d="M1 1.5H4.5V5.5M4.5 9.5V13.5H1" fill="none" stroke="#c0c0c0" stroke-width="1.1"/><path d="M5.5 7.5H9M7.2 6L5.5 7.5L7.2 9" stroke="#b8b8b8" fill="none"/><rect x="9.5" y="6" width="5.5" height="3" fill="#f0f0f0" stroke="#c0c0c0"/></svg>
<span class="t y" style="left:331px;top:510.0px;height:20px;line-height:20px;color:#9a9a9a;">插入</span>
<svg style="left:361px;top:511px;" width="16" height="16" viewBox="0 0 16 16"><path d="M1 1.5H5V5M5 10V13.5H1" fill="none" stroke="#c0c0c0" stroke-width="1.1"/><rect x="1" y="6" width="7" height="3" fill="#e8e8e8" stroke="#c0c0c0"/><path d="M9 7.5H14.5M12.8 6L14.5 7.5L12.8 9" stroke="#b8b8b8" fill="none"/></svg>
<span class="t y" style="left:381px;top:510.0px;height:20px;line-height:20px;color:#9a9a9a;">删除</span>
<svg style="left:414px;top:511px;" width="16" height="16" viewBox="0 0 16 16"><path d="M1.5 2V15.5" stroke="#111" stroke-width="1.6"/><path d="M4.5 8V15.5M7 10.5V15.5M9.5 12V15.5M12 13.5V15.5" stroke="#667" stroke-width="1" stroke-dasharray="1 1"/><path d="M3.5 2.5H11M9 0.8L11.2 2.5L9 4.2" stroke="#c02818" stroke-width="1.1" fill="none"/><rect x="13" y="1" width="1.6" height="3" fill="#111"/></svg>
<span class="t y" style="left:433px;top:510.0px;height:20px;line-height:20px;">缩尺配筋</span>
<svg style="left:488px;top:511px;" width="16" height="16" viewBox="0 0 16 16"><rect x="4.5" y="4.5" width="11" height="11" fill="#e8f0fc" stroke="#8a9ab8"/><path d="M10 4.5V15.5M4.5 10H15.5" stroke="#fff" stroke-width="1.2"/><rect x="5" y="5" width="4.5" height="4.5" fill="#8ab0e8"/><rect x="10.6" y="10.6" width="4.4" height="4.4" fill="#a8c4f0"/><path d="M0.8 12L2 8.5L8.5 1.5L10.8 3.5L4.3 10.8Z" fill="#f0d070" stroke="#5a4a1a" stroke-width="0.9"/><path d="M8.5 1.5L9.5 0.5L11.8 2.5L10.8 3.5Z" fill="#d04040"/></svg>
<span class="t y" style="left:508px;top:510.0px;height:20px;line-height:20px;">钢筋信息</span>
<svg style="left:563px;top:511px;" width="16" height="16" viewBox="0 0 16 16"><rect x="0.5" y="1.5" width="15" height="13" fill="#fff" stroke="#5a7ac8" stroke-width="1.1"/><rect x="1" y="2" width="14" height="2.6" fill="#8aa4e0"/><path d="M3 9.5V7H12.5V9.5" stroke="#555" fill="none"/><path d="M3 12.5H5M6.5 12.5H8.5" stroke="#e0a020" stroke-width="1.3"/><path d="M10 12.5H12M13 12.5H14" stroke="#d04040" stroke-width="1.3"/></svg>
<span class="t y" style="left:583px;top:510.0px;height:20px;line-height:20px;">钢筋图库</span>
<svg style="left:638px;top:511px;" width="16" height="16" viewBox="0 0 16 16"><rect x="0.5" y="1.5" width="10.5" height="11" fill="#fff" stroke="#9aa4b8"/><path d="M2 4H9.5M2 6.5H6M2 9H5M3 14.5H5M6 14.5H7" stroke="#7a849a"/><path d="M6.5 7.5H10.5V5L15.5 9.2L10.5 13.5V11H6.5Z" fill="#3a7ae8" stroke="#1a4ab0" stroke-width="0.8"/></svg>
<span class="t y" style="left:658px;top:510.0px;height:20px;line-height:20px;">其他</span>
<svg style="left:684.5px;top:518.5px;shape-rendering:crispEdges" width="5" height="3" viewBox="0 0 5 3"><path d="M0 0H5L2.5 3Z" fill="#000"/></svg>
<span class="t y" style="left:698px;top:510.0px;height:20px;line-height:20px;">关闭</span>
<span class="t y" style="left:737px;top:510.0px;height:20px;line-height:20px;letter-spacing:0.3px">单构件钢筋总重(kg) : 492.532</span>
<div style="left:156px;top:533px;width:1209px;height:172.5px;background:#fff;border:1px solid #a0a4ac"></div>
<div style="left:157px;top:534px;width:1187px;height:19px;background:linear-gradient(#ffffff,#f1f1f1)"></div>
<div style="left:190px;top:553px;width:1154px;height:134px;background:#ccffd4"></div>
<div style="left:157px;top:553px;width:33px;height:134px;background:linear-gradient(90deg,#f0f0f0,#ffffff)"></div>
<div style="left:157px;top:553px;width:33px;height:34px;background:#ffcc80"></div>
<div style="left:157px;top:553px;width:1187px;height:1px;background:#b4b4b4"></div>
<div style="left:157px;top:587px;width:1187px;height:1px;background:#b4b4b4"></div>
<div style="left:157px;top:621px;width:1187px;height:1px;background:#b4b4b4"></div>
<div style="left:157px;top:655px;width:1187px;height:1px;background:#b4b4b4"></div>
<div style="left:157px;top:687px;width:1187px;height:1px;background:#b4b4b4"></div>
<div style="left:190px;top:534px;width:1px;height:153px;background:#b4b4b4"></div>
<div style="left:263px;top:534px;width:1px;height:153px;background:#b4b4b4"></div>
<div style="left:296px;top:534px;width:1px;height:153px;background:#b4b4b4"></div>
<div style="left:497px;top:534px;width:1px;height:153px;background:#b4b4b4"></div>
<div style="left:663px;top:534px;width:1px;height:153px;background:#b4b4b4"></div>
<div style="left:819px;top:534px;width:1px;height:153px;background:#b4b4b4"></div>
<div style="left:880px;top:534px;width:1px;height:153px;background:#b4b4b4"></div>
<div style="left:918px;top:534px;width:1px;height:153px;background:#b4b4b4"></div>
<div style="left:957px;top:534px;width:1px;height:153px;background:#b4b4b4"></div>
<div style="left:1006px;top:534px;width:1px;height:153px;background:#b4b4b4"></div>
<div style="left:1067px;top:534px;width:1px;height:153px;background:#b4b4b4"></div>
<div style="left:1128px;top:534px;width:1px;height:153px;background:#b4b4b4"></div>
<div style="left:1199px;top:534px;width:1px;height:153px;background:#b4b4b4"></div>
<div style="left:1273px;top:534px;width:1px;height:153px;background:#b4b4b4"></div>
<div style="left:1344px;top:534px;width:1px;height:153px;background:#b4b4b4"></div>
<div style="left:262.8px;top:554px;width:1.4px;height:133px;background:#000"></div>
<span class="t s" style="left:190px;width:73px;text-align:center;top:538px;height:16px;line-height:16px">筋号</span>
<span class="t s" style="left:263px;width:33px;text-align:center;top:538px;height:16px;line-height:16px">图号</span>
<span class="t s" style="left:296px;width:201px;text-align:center;top:538px;height:16px;line-height:16px">图形</span>
<span class="t s" style="left:497px;width:166px;text-align:center;top:538px;height:16px;line-height:16px">计算公式</span>
<span class="t s" style="left:663px;width:156px;text-align:center;top:538px;height:16px;line-height:16px">公式描述</span>
<span class="t s" style="left:819px;width:61px;text-align:center;top:538px;height:16px;line-height:16px">长度<i>(mm)</i></span>
<span class="t s" style="left:880px;width:38px;text-align:center;top:538px;height:16px;line-height:16px">根数</span>
<span class="t s" style="left:918px;width:39px;text-align:center;top:538px;height:16px;line-height:16px">搭接</span>
<span class="t s" style="left:957px;width:49px;text-align:center;top:538px;height:16px;line-height:16px">损耗<i>(%)</i></span>
<span class="t s" style="left:1006px;width:61px;text-align:center;top:538px;height:16px;line-height:16px">单重<i>(kg)</i></span>
<span class="t s" style="left:1067px;width:61px;text-align:center;top:538px;height:16px;line-height:16px">总重<i>(kg)</i></span>
<span class="t s" style="left:1128px;width:71px;text-align:center;top:538px;height:16px;line-height:16px">钢筋归类</span>
<span class="t s" style="left:1199px;width:74px;text-align:center;top:538px;height:16px;line-height:16px">搭接形式</span>
<span class="t s" style="left:1273px;width:71px;text-align:center;top:538px;height:16px;line-height:16px">钢筋类型</span>
<span class="t s" style="left:168px;top:563.5px;height:16px;line-height:16px;color:#400060;"><i>1*</i></span>
<span class="t s" style="left:192.8px;top:558.0px;height:16px;line-height:16px;color:#000;"><i>1</i>跨<i>.</i>上通长</span>
<span class="t s" style="left:192.8px;top:570.2px;height:16px;line-height:16px;color:#000;">筋<i>1</i></span>
<span class="t s" style="left:265.8px;top:563.5px;height:16px;line-height:16px;color:#000;"><i>64</i></span>
<span class="t s" style="left:499.8px;top:563.5px;height:16px;line-height:16px;color:#000;"><i>37*d+6450-20+100+37*d-20</i></span>
<span class="t s" style="left:666.2px;top:558.0px;height:16px;line-height:16px;color:#000;">节点设置锚固长度<i>+</i>净长<i>-</i>保</span>
<span class="t s" style="left:666.2px;top:570.2px;height:16px;line-height:16px;color:#000;">护层<i>+</i>弯折</span>
<span class="t s" style="left:821.8px;top:563.5px;height:16px;line-height:16px;color:#000;"><i>8360</i></span>
<span class="t s" style="left:882.8px;top:563.5px;height:16px;line-height:16px;color:#000;"><i>2</i></span>
<span class="t s" style="left:920.8px;top:563.5px;height:16px;line-height:16px;color:#000;"><i>0</i></span>
<span class="t s" style="left:959.8px;top:563.5px;height:16px;line-height:16px;color:#000;"><i>0</i></span>
<span class="t s" style="left:1008.8px;top:563.5px;height:16px;line-height:16px;color:#000;"><i>32.186</i></span>
<span class="t s" style="left:1069.8px;top:563.5px;height:16px;line-height:16px;color:#000;"><i>64.372</i></span>
<span class="t s" style="left:1131.2px;top:563.5px;height:16px;line-height:16px;color:#000;">直筋</span>
<span class="t s" style="left:1202.2px;top:563.5px;height:16px;line-height:16px;color:#ff0000;">直螺纹连接</span>
<span class="t s" style="left:1276.2px;top:563.5px;height:16px;line-height:16px;color:#000;">普通钢筋</span>
<span class="t s" style="left:168px;top:597.5px;height:16px;line-height:16px;color:#000;"><i>2</i></span>
<span class="t s" style="left:192.8px;top:592.0px;height:16px;line-height:16px;color:#000;"><i>1</i>跨<i>.</i>上通长</span>
<span class="t s" style="left:192.8px;top:604.2px;height:16px;line-height:16px;color:#000;">筋<i>2</i></span>
<span class="t s" style="left:265.8px;top:597.5px;height:16px;line-height:16px;color:#000;"><i>18</i></span>
<span class="t s" style="left:499.8px;top:597.5px;height:16px;line-height:16px;color:#000;"><i>37*d+9750+37*d</i></span>
<span class="t s" style="left:666.2px;top:592.0px;height:16px;line-height:16px;color:#000;">直锚<i>+</i>净长<i>+</i>节点设置锚固长</span>
<span class="t s" style="left:666.2px;top:604.2px;height:16px;line-height:16px;color:#000;">度</span>
<span class="t s" style="left:821.8px;top:597.5px;height:16px;line-height:16px;color:#000;"><i>11600</i></span>
<span class="t s" style="left:882.8px;top:597.5px;height:16px;line-height:16px;color:#000;"><i>2</i></span>
<span class="t s" style="left:920.8px;top:597.5px;height:16px;line-height:16px;color:#000;"><i>1</i></span>
<span class="t s" style="left:959.8px;top:597.5px;height:16px;line-height:16px;color:#000;"><i>0</i></span>
<span class="t s" style="left:1008.8px;top:597.5px;height:16px;line-height:16px;color:#000;"><i>44.66</i></span>
<span class="t s" style="left:1069.8px;top:597.5px;height:16px;line-height:16px;color:#000;"><i>89.32</i></span>
<span class="t s" style="left:1131.2px;top:597.5px;height:16px;line-height:16px;color:#000;">直筋</span>
<span class="t s" style="left:1202.2px;top:597.5px;height:16px;line-height:16px;color:#ff0000;">直螺纹连接</span>
<span class="t s" style="left:1276.2px;top:597.5px;height:16px;line-height:16px;color:#000;">普通钢筋</span>
<span class="t s" style="left:168px;top:631.5px;height:16px;line-height:16px;color:#000;"><i>3</i></span>
<span class="t s" style="left:192.8px;top:626.0px;height:16px;line-height:16px;color:#000;"><i>1</i>跨<i>.</i>下通长</span>
<span class="t s" style="left:192.8px;top:638.2px;height:16px;line-height:16px;color:#000;">筋<i>1</i></span>
<span class="t s" style="left:265.8px;top:631.5px;height:16px;line-height:16px;color:#000;"><i>64</i></span>
<span class="t s" style="left:499.8px;top:631.5px;height:16px;line-height:16px;color:#000;"><i>37*d+16200+37*d</i></span>
<span class="t s" style="left:666.2px;top:631.5px;height:16px;line-height:16px;color:#000;">直锚<i>+</i>弯折<i>+</i>净长<i>+</i>直锚<i>+</i>弯折</span>
<span class="t s" style="left:821.8px;top:631.5px;height:16px;line-height:16px;color:#000;"><i>18050</i></span>
<span class="t s" style="left:882.8px;top:631.5px;height:16px;line-height:16px;color:#000;"><i>4</i></span>
<span class="t s" style="left:920.8px;top:631.5px;height:16px;line-height:16px;color:#000;"><i>1</i></span>
<span class="t s" style="left:959.8px;top:631.5px;height:16px;line-height:16px;color:#000;"><i>0</i></span>
<span class="t s" style="left:1008.8px;top:631.5px;height:16px;line-height:16px;color:#000;"><i>69.493</i></span>
<span class="t s" style="left:1069.8px;top:631.5px;height:16px;line-height:16px;color:#000;"><i>277.97</i></span>
<span class="t s" style="left:1131.2px;top:631.5px;height:16px;line-height:16px;color:#000;">直筋</span>
<span class="t s" style="left:1202.2px;top:631.5px;height:16px;line-height:16px;color:#ff0000;">直螺纹连接</span>
<span class="t s" style="left:1276.2px;top:631.5px;height:16px;line-height:16px;color:#000;">普通钢筋</span>
<span class="t s" style="left:168px;top:664.5px;height:16px;line-height:16px;color:#000;"><i>4</i></span>
<span class="t s" style="left:192.8px;top:664.5px;height:16px;line-height:16px;color:#000;"><i>1</i>跨<i>.</i>箍筋<i>1</i></span>
<span class="t s" style="left:265.8px;top:664.5px;height:16px;line-height:16px;color:#000;"><i>195</i></span>
<span class="t s" style="left:499.8px;top:659.0px;height:16px;line-height:16px;color:#000;"><i>2*((350-2*20)+(550-2*20))+</i></span>
<span class="t s" style="left:499.8px;top:671.2px;height:16px;line-height:16px;color:#000;"><i>2*(11.9*d)</i></span>
<span class="t s" style="left:821.8px;top:664.5px;height:16px;line-height:16px;color:#000;"><i>1830</i></span>
<span class="t s" style="left:882.8px;top:664.5px;height:16px;line-height:16px;color:#000;"><i>9</i></span>
<span class="t s" style="left:920.8px;top:664.5px;height:16px;line-height:16px;color:#000;"><i>0</i></span>
<span class="t s" style="left:959.8px;top:664.5px;height:16px;line-height:16px;color:#000;"><i>0</i></span>
<span class="t s" style="left:1008.8px;top:664.5px;height:16px;line-height:16px;color:#000;"><i>0.723</i></span>
<span class="t s" style="left:1069.8px;top:664.5px;height:16px;line-height:16px;color:#000;"><i>6.506</i></span>
<span class="t s" style="left:1131.2px;top:664.5px;height:16px;line-height:16px;color:#000;">箍筋</span>
<span class="t s" style="left:1202.2px;top:664.5px;height:16px;line-height:16px;color:#000;">绑扎</span>
<span class="t s" style="left:1276.2px;top:664.5px;height:16px;line-height:16px;color:#000;">普通钢筋</span>
<svg style="left:0;top:0" width="1366" height="700" viewBox="0 0 1366 700"><path d="M336.75 562V576H455.75V562" fill="none" stroke="#000" stroke-width="1.5"/><path d="M329.25 596.5V610.5H467.5" fill="none" stroke="#000" stroke-width="1.5"/><path d="M336.75 630V644H455.75V630" fill="none" stroke="#000" stroke-width="1.5"/><rect x="378.7" y="662.5" width="33.5" height="21.5" rx="1.5" fill="none" stroke="#000" stroke-width="1.4"/><path d="M399 668.5L408 663M404 675L410.5 665.5" stroke="#000" stroke-width="1.4"/></svg>
<span class="t y" style="left:315.5px;top:560.0px;height:20px;line-height:20px;font-size:11px;letter-spacing:0.2px;-webkit-text-stroke:0">645</span>
<span class="t y" style="left:384.5px;top:559.5px;height:20px;line-height:20px;font-size:11px;color:#ff0000;letter-spacing:0.2px;-webkit-text-stroke:0">6710</span>
<span class="t y" style="left:458px;top:560.0px;height:20px;line-height:20px;font-size:11px;letter-spacing:0.2px;-webkit-text-stroke:0">1005</span>
<span class="t y" style="left:306px;top:595.5px;height:20px;line-height:20px;font-size:11px;letter-spacing:0.2px;-webkit-text-stroke:0">645</span>
<span class="t y" style="left:379.5px;top:590.0px;height:20px;line-height:20px;font-size:11px;color:#ff0000;letter-spacing:0px;-webkit-text-stroke:0">10955</span>
<span class="t y" style="left:315px;top:629.0px;height:20px;line-height:20px;font-size:11px;letter-spacing:0.2px;-webkit-text-stroke:0">645</span>
<span class="t y" style="left:382px;top:627.0px;height:20px;line-height:20px;font-size:11px;color:#ff0000;letter-spacing:0px;-webkit-text-stroke:0">16760</span>
<span class="t y" style="left:458px;top:629.0px;height:20px;line-height:20px;font-size:11px;letter-spacing:0.2px;-webkit-text-stroke:0">645</span>
<span class="t y" style="left:351px;top:665.0px;height:20px;line-height:20px;font-size:11px;letter-spacing:0.2px;-webkit-text-stroke:0">510</span>
<span class="t y" style="left:379.5px;top:667.0px;height:20px;line-height:20px;font-size:11px;color:#ff0000;-webkit-text-stroke:0">310</span>
<div style="left:1347px;top:535px;width:16px;height:153px;background:#f0f0f0"></div>
<div style="left:1347px;top:552px;width:15px;height:27px;background:#cdcdcd"></div>
<svg style="left:1350.5px;top:540px;" width="9" height="7" viewBox="0 0 9 7"><path d="M1 6L4.5 2L8 6" fill="none" stroke="#505050" stroke-width="2.2"/></svg>
<svg style="left:1350.5px;top:675.5px;" width="9" height="7" viewBox="0 0 9 7"><path d="M1 1L4.5 5L8 1" fill="none" stroke="#505050" stroke-width="2.2"/></svg>
<div style="left:157px;top:688px;width:1206px;height:16px;background:#f0f0f0"></div>
<div style="left:500px;top:688px;width:829px;height:15px;background:#cdcdcd"></div>
<svg style="left:163px;top:691px;" width="7" height="9" viewBox="0 0 7 9"><path d="M6 1L2 4.5L6 8" fill="none" stroke="#505050" stroke-width="2.2"/></svg>
<svg style="left:1335px;top:691px;" width="7" height="9" viewBox="0 0 7 9"><path d="M1 1L5 4.5L1 8" fill="none" stroke="#505050" stroke-width="2.2"/></svg>
<div style="left:0px;top:706px;width:1366px;height:22px;background:#f0f0f0"></div>
<div style="left:0px;top:708px;width:147px;height:18px;background:#f8f8f8;border:1px solid #d8d8d8;border-bottom-color:#e4e4e4"></div>
<div style="left:150px;top:708px;width:77px;height:18px;background:#f8f8f8;border:1px solid #d8d8d8;border-bottom-color:#e4e4e4"></div>
<div style="left:230px;top:708px;width:97px;height:18px;background:#f8f8f8;border:1px solid #d8d8d8;border-bottom-color:#e4e4e4"></div>
<div style="left:330px;top:708px;width:47px;height:18px;background:#f8f8f8;border:1px solid #d8d8d8;border-bottom-color:#e4e4e4"></div>
<div style="left:380px;top:708px;width:913px;height:18px;background:#f8f8f8;border:1px solid #d8d8d8;border-bottom-color:#e4e4e4"></div>
<div style="left:1296px;top:708px;width:70px;height:18px;background:#f8f8f8;border:1px solid #d8d8d8;border-bottom-color:#e4e4e4"></div>
<span class="t s" style="left:2px;top:712.0px;height:16px;line-height:16px;"><i>X=84379 Y=7313</i></span>
<span class="t s" style="left:152px;top:712.0px;height:16px;line-height:16px;">层高<i>:4.5m</i></span>
<span class="t s" style="left:232px;top:712.0px;height:16px;line-height:16px;">底标高<i>:-0.03m</i></span>
<span class="t s" style="left:332px;top:712.0px;height:16px;line-height:16px;"><i>1(2)</i></span>
<span class="t s" style="left:382px;top:712.0px;height:16px;line-height:16px;">按鼠标左键指定第一个角点，或拾取构件图元</span>
<span class="t s" style="left:1298px;top:712.0px;height:16px;line-height:16px;"><i>348 FPS</i></span>
<div style="left:0px;top:728px;width:1366px;height:40px;background:#030b0f"></div>
<div style="left:0px;top:728px;width:48px;height:40px;background:#000"></div>
<div style="left:48px;top:728px;width:344px;height:40px;background:#2c2c2c"></div>
<div style="left:1296px;top:728px;width:70px;height:40px;background:#000"></div>
<div style="left:1361px;top:732px;width:1px;height:36px;background:#5a5a5a"></div>
<svg style="left:16px;top:740px;" width="16" height="16" viewBox="0 0 17 17"><path d="M0 2.4L7 1.4V8H0ZM8 1.2L17 0V8H8ZM0 9H7V15.6L0 14.6ZM8 9H17V17L8 15.8Z" fill="#fff"/></svg>
<svg style="left:56px;top:737px;" width="24" height="24" viewBox="0 0 24 24"><circle cx="12" cy="12" r="9" fill="none" stroke="#f2f2f2" stroke-width="2.8"/></svg>
<span class="t y" style="left:84px;top:737.3px;height:22px;line-height:22px;color:#a2a2a2;font-size:14px;-webkit-text-stroke:0;">在这里输入你要搜索的内容</span>
<svg style="left:364px;top:739px;" width="14" height="20" viewBox="0 0 14 20"><rect x="4.5" y="1.5" width="5" height="10" rx="2.5" fill="none" stroke="#a0a0a0" stroke-width="1.2"/><path d="M2 8.5Q2 14 7 14Q12 14 12 8.5M7 14V17.5M4.5 17.5H9.5" fill="none" stroke="#a0a0a0" stroke-width="1.2"/></svg>
<svg style="left:406px;top:736px;" width="26" height="26" viewBox="0 0 26 26"><g fill="#e8e8e8"><path d="M13 13Q4 13 3 6Q6 0 13 3Q15 8 13 13Z"/><path d="M13 13Q13 4 20 3Q26 6 23 13Q18 15 13 13Z"/><path d="M13 13Q22 13 23 20Q20 26 13 23Q11 18 13 13Z"/><path d="M13 13Q13 22 6 23Q0 20 3 13Q8 11 13 13Z"/></g><circle cx="13" cy="13" r="1.6" fill="#030b0f"/></svg>
<svg style="left:456px;top:738px;" width="22" height="22" viewBox="0 0 22 22"><path d="M17 4Q9 0 4 6Q0 13 6 18Q12 21 17 17Q20 13 16 9.5Q12 7.5 9.5 10.5Q8 14 11.5 14.5" fill="none" stroke="#d8d8d8" stroke-width="1.6"/><path d="M14 3L20 5.5" stroke="#d8d8d8" stroke-width="1.4"/></svg>
<svg style="left:510px;top:737px;" width="22" height="22" viewBox="0 0 22 22"><path fill-rule="evenodd" d="M0.3 9.8C1.5 4 5.5 0.6 11.3 0.6C17.6 0.6 21.6 4.8 21.6 11.2V13.4H7.4C7.7 16.4 9.9 18 13.2 18C15.8 18 18 17.3 20.2 16V20.1C18 21.2 15.4 21.8 12.4 21.8C5.7 21.8 1.7 17.8 1.7 12C1.7 9.4 2.6 7.2 4.2 5.6C2.6 6.4 1.3 7.8 0.3 9.8ZM7.5 9.4H15.2C15.1 6.6 13.7 5.1 11.5 5.1C9.4 5.1 7.9 6.7 7.5 9.4Z" fill="#1a7be0"/></svg>
<svg style="left:558px;top:735px;" width="24" height="26" viewBox="0 0 24 26"><path d="M7 8V5Q7 1.5 11.5 1.5Q16 1.5 16 5V8" fill="none" stroke="#e8e8e8" stroke-width="1.2"/><path d="M1 8L22 5.5V25L1 22Z" fill="#fff"/><path d="M5 11.5H10.5V15.5H5ZM12 11H18V15.5H12ZM5 17H10.5V21H5ZM12 17H18V21.5H12Z" fill="#030b0f"/></svg>
<svg style="left:607px;top:737px;" width="24" height="22" viewBox="0 0 24 22"><path d="M1 2H9L11 4.5H23V20H1Z" fill="#f5c84c"/><path d="M1 6H23V20H1Z" fill="#fbe08a"/><path d="M6 13H18V20H6Z" fill="#3a9ae8"/><path d="M9.5 16.5H14.5V20H9.5Z" fill="#fbe08a"/></svg>
<svg style="left:655px;top:735px;" width="28" height="27" viewBox="0 0 28 27"><path d="M21 6Q13 0 6 6Q0 13 6 21Q13 26 21 21Q26 16 21 12Q16 9 12 13Q11 17 15 17.5Q12 20 9 17Q6 12 10 8Q16 5 21 9Z" fill="#2a9cf0"/><path d="M18 2L27 4L22 8Z" fill="#2a9cf0"/></svg>
<svg style="left:705px;top:735px;" width="26" height="26" viewBox="0 0 26 26"><circle cx="12" cy="14" r="10" fill="#3cb83c"/><circle cx="12" cy="14" r="10" fill="none" stroke="#9ae89a" stroke-width="1"/><text x="12" y="21" font-family="Liberation Sans,sans-serif" font-weight="bold" font-size="20" fill="#fff" text-anchor="middle">e</text><path d="M2 22Q14 16 22 2" stroke="#58c858" fill="none" stroke-width="1.6"/></svg>
<div style="left:742px;top:728px;width:47.5px;height:40px;background:#353b3f"></div>
<svg style="left:754px;top:736px;" width="24" height="24" viewBox="0 0 16 16"><rect x="0" y="0" width="16" height="16" rx="3.6" fill="#1a92f2"/><path d="M6.7 12.3V4.2Q6.8 2.7 8 2.7Q9 2.8 8.9 4.3M6.7 12.3Q6.9 13.3 8 13.2Q9 13 9 11.9" fill="none" stroke="#fff" stroke-width="1.3" stroke-linecap="round"/><path d="M2.6 8.2H12.6Q12.9 6.7 11.3 6.6M4 6.6L2.4 8.2L4 9.8" fill="none" stroke="#fff" stroke-width="1.3" stroke-linecap="round" stroke-linejoin="round"/></svg>
<svg style="left:803px;top:736px;" width="24" height="24" viewBox="0 0 24 24"><rect x="0.5" y="0.5" width="23" height="23" rx="2" fill="#f0a020" stroke="#c87010"/><path d="M4 6L17 3L20 19L7 21Z" fill="#fff"/><path d="M7 9L15 7.5M7.5 12L15.5 10.5M8 15L14 14" stroke="#a0a0a0"/><path d="M22 2L10 17L9 21L13 19Z" fill="#e06020" stroke="#903010" stroke-width="0.6"/></svg>
<svg style="left:854px;top:738px;" width="20" height="22" viewBox="0 0 20 22"><rect x="1.5" y="7" width="9" height="12" fill="#fff" stroke="#404040"/><path d="M3 10H9M3 12.5H9M3 15H9" stroke="#404040"/><text x="13.5" y="14" font-family="Liberation Sans,sans-serif" font-weight="bold" font-size="17" fill="#f0e020" text-anchor="middle">?</text></svg>
<div style="left:648.5px;top:766px;width:38.5px;height:2px;background:#76b9ed"></div>
<div style="left:697px;top:766px;width:39px;height:2px;background:#76b9ed"></div>
<div style="left:742px;top:766px;width:47.5px;height:2px;background:#76b9ed"></div>
<div style="left:795px;top:766px;width:40px;height:2px;background:#76b9ed"></div>
<div style="left:844px;top:766px;width:39.5px;height:2px;background:#76b9ed"></div>
<div style="left:687px;top:766px;width:4.5px;height:2px;background:#4a6a80"></div>
<div style="left:736px;top:766px;width:1.5px;height:2px;background:#4a6a80"></div>
<span class="t y" style="left:1004px;top:731.5px;height:16px;line-height:16px;color:#fff;font-size:12px;-webkit-text-stroke:0;letter-spacing:0.19px;">40%</span>
<span class="t y" style="left:992px;top:748.3px;height:16px;line-height:16px;color:#fff;font-size:12px;-webkit-text-stroke:0;letter-spacing:-0.269px;">CPU使用</span>
<svg style="left:1060px;top:742px;" width="14" height="10" viewBox="0 0 14 10"><path d="M1 8L7 2L13 8" fill="none" stroke="#fff" stroke-width="1.4"/></svg>
<svg style="left:1082px;top:742px;" width="18" height="12" viewBox="0 0 18 12"><rect x="5.5" y="2.5" width="10" height="7" fill="none" stroke="#fff"/><rect x="16" y="4.5" width="1.5" height="3" fill="#fff"/><rect x="7" y="4" width="5" height="4" fill="#fff"/><path d="M0.5 4.5H3.5V7.5H0.5ZM3.5 6H5.5M1.5 2.5V4.5M2.8 2.5V4.5" stroke="#fff" fill="none"/></svg>
<svg style="left:1109px;top:741px;" width="14" height="14" viewBox="0 0 14 14"><path d="M1 13A12 12 0 0 1 13 1M4.5 13A8.5 8.5 0 0 1 13 4.5M8 13A5 5 0 0 1 13 8" fill="none" stroke="#d0d0d0" stroke-width="1.2"/><circle cx="12" cy="12" r="1.6" fill="#fff"/></svg>
<svg style="left:1129px;top:741px;" width="18" height="14" viewBox="0 0 18 14"><path d="M1.5 5H4L7.5 1.5V12.5L4 9H1.5Z" fill="none" stroke="#fff" stroke-width="1.1"/><path d="M10 4.5Q11.5 7 10 9.5M12 3Q14.5 7 12 11" fill="none" stroke="#fff"/><path d="M14.3 1.5Q17.5 7 14.3 12.5" fill="none" stroke="#808080"/></svg>
<svg style="left:1154px;top:740px;" width="24" height="15" viewBox="0 0 24 15"><rect x="0.7" y="0.7" width="22" height="13" rx="1.5" fill="none" stroke="#fff" stroke-width="1.3"/><path d="M3.5 4H20M3.5 6.5H20M3.5 9H20" stroke="#fff" stroke-width="1.2" stroke-dasharray="1.3 1.1"/><path d="M6 11.5H17.5" stroke="#fff" stroke-width="1.2"/></svg>
<span class="t y" style="left:1185.5px;top:737.0px;height:20px;line-height:20px;color:#fff;font-size:15px;">中</span>
<svg style="left:1213px;top:740px;" width="20" height="17" viewBox="0 0 20 17"><g transform="rotate(-10 10 8.5)"><rect x="1.5" y="1.5" width="16.5" height="13.5" rx="3.5" fill="#f25a1c"/></g><text x="9.8" y="14" font-family="Liberation Sans,sans-serif" font-weight="bold" font-style="italic" font-size="15" fill="#fff" text-anchor="middle">S</text></svg>
<span class="t y" style="left:1264px;top:730.5px;height:16px;line-height:16px;color:#fff;font-size:12px;-webkit-text-stroke:0;letter-spacing:0.16px;">9:55</span>
<span class="t y" style="left:1247px;top:749.0px;height:16px;line-height:16px;color:#fff;font-size:12px;-webkit-text-stroke:0;letter-spacing:0.657px;">2017/9/24</span>
<svg style="left:1325px;top:740px;" width="28" height="24" viewBox="0 0 28 24"><path d="M1 1H15.5V11.5H5L1 14.5Z" fill="none" stroke="#fff" stroke-width="1.4"/><path d="M3.5 4H13M3.5 6.5H13M3.5 9H13" stroke="#fff"/><circle cx="14.5" cy="14.2" r="8.3" fill="#1a1a1a" stroke="#8a8a8a" stroke-width="1.2"/><text x="14.5" y="18.2" font-family="Liberation Sans,sans-serif" font-weight="bold" font-size="11" fill="#fff" text-anchor="middle">16</text></svg>
<svg style="left:1140px;top:448px" width="166" height="262" viewBox="1140 448 166 262"><ellipse cx="1222.2" cy="579.8" rx="68.6" ry="120.6" fill="none" stroke="#ff0000" stroke-width="9.3"/></svg>
</body></html>
